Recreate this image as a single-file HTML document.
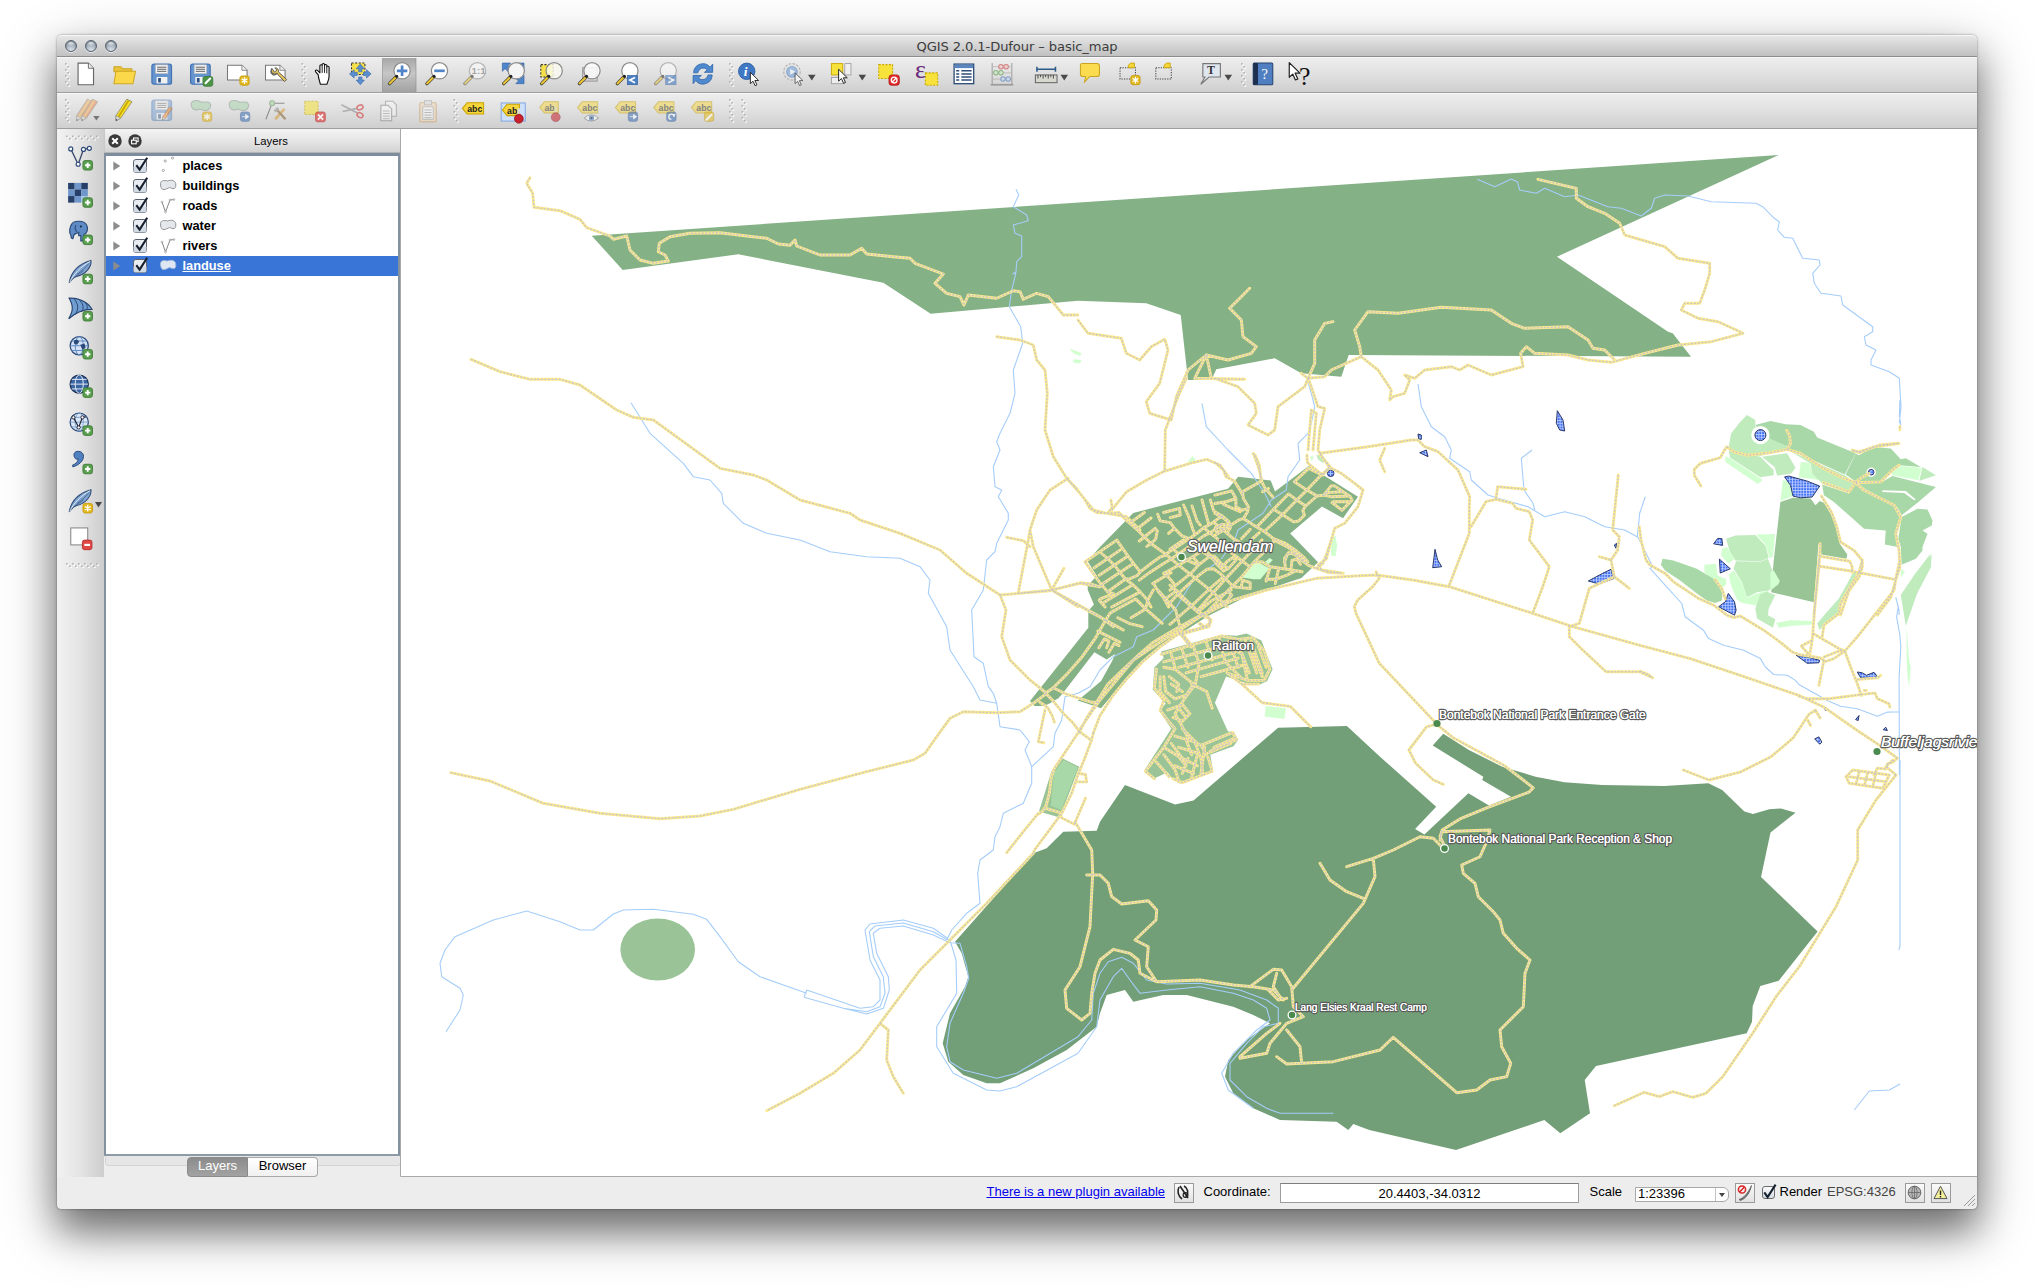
<!DOCTYPE html>
<html><head><meta charset="utf-8"><title>QGIS 2.0.1-Dufour - basic_map</title>
<style>
html,body{margin:0;padding:0}
body{width:2034px;height:1288px;background:#fff;position:relative;overflow:hidden;font-family:"Liberation Sans",sans-serif;color:#000}
.abs{position:absolute}
#win{position:absolute;left:57px;top:35px;width:1920px;height:1174px;background:#ededed;border-radius:5px 5px 4px 4px;
 box-shadow:0 0 1px rgba(0,0,0,.55),0 0 3px rgba(0,0,0,.25),0 22px 36px rgba(0,0,0,.42),0 18px 60px rgba(0,0,0,.30);}
#title{position:absolute;left:0;top:0;width:1920px;height:21px;border-radius:5px 5px 0 0;background:linear-gradient(#e8e8e8,#d4d4d4 50%,#c1c1c1);border-bottom:1px solid #8c8c8c;box-shadow:inset 0 1px 0 #f6f6f6}
#title span{position:absolute;left:0;width:1920px;top:3.5px;text-align:center;font-family:"DejaVu Sans","Liberation Sans",sans-serif;font-size:13.1px;color:#3c3c3c;letter-spacing:-0.1px}
.tl{position:absolute;top:5px;width:10px;height:10px;border-radius:50%;background:radial-gradient(ellipse 62% 34% at 50% 16%,rgba(255,255,255,.8),rgba(255,255,255,0) 100%),radial-gradient(circle at 50% 92%,#dce4ec 0,#a7b3bf 50%,#7a8694 100%);border:1px solid #56616d;box-shadow:inset 0 1px 1px rgba(60,70,80,.55),0 1px 0 rgba(255,255,255,.6)}
.tb{position:absolute;left:0;width:1920px;height:35px;background:linear-gradient(#eeeeee,#e0e0e0 50%,#cfcfcf);border-bottom:1px solid #9e9e9e;box-shadow:inset 0 1px 0 #f8f8f8}
#side{position:absolute;left:0;top:94px;width:47px;height:1048px;background:linear-gradient(90deg,#f2f2f2,#e4e4e4 50%,#cdcdcd)}
#ltitle{position:absolute;left:47px;top:94px;width:296px;height:23px;background:linear-gradient(#f4f4f4,#e2e2e2 60%,#d2d2d2);border-bottom:1px solid #b5b5b5;border-left:1px solid #c8c8c8}
#ltitle span{position:absolute;left:0;width:332px;top:6px;text-align:center;font-size:11.3px}
#list{position:absolute;left:47px;top:118px;width:292px;height:998px;background:#fff;border:2px solid #8492a0;border-top:3px solid #7d8d9e;border-bottom:2px solid #8d9aa8}
.row{position:absolute;left:0;width:292px;height:20px;font-weight:bold;font-size:12.8px;line-height:20px}
.row span{position:absolute;left:76.5px;top:0}
#status{position:absolute;left:0;top:1142px;width:1920px;height:32px;font-size:13px}
#status .t{position:absolute;top:7px;white-space:nowrap}
.sbtn{position:absolute;top:6px;width:20px;height:20px;border:1px solid #9a9a9a;background:linear-gradient(#fafafa,#e2e2e2);box-sizing:border-box}

</style></head><body>
<div id="win">
<div id="title"><span>QGIS 2.0.1-Dufour – basic_map</span>
<div class="tl" style="left:8.3px"></div>
<div class="tl" style="left:28.3px"></div>
<div class="tl" style="left:48.3px"></div>
</div>
<div class="tb" style="top:22px"></div><div class="tb" style="top:58px"></div>
<div id="side"></div>
<div id="ltitle"><span>Layers</span></div>
<div id="list">
<div class="row" style="top:0px;"><span>places</span></div>
<div class="row" style="top:20px;"><span>buildings</span></div>
<div class="row" style="top:40px;"><span>roads</span></div>
<div class="row" style="top:60px;"><span>water</span></div>
<div class="row" style="top:80px;"><span>rivers</span></div>
<div class="row" style="top:100px;background:#3875d7;color:#fff;"><span style="text-decoration:underline">landuse</span></div>
</div>
<div class="abs" style="left:48px;top:1121px;width:294px;height:9px;border:1px solid #d4d4d4;border-top:none;border-radius:0 0 4px 4px;background:#e6e6e6"></div>
<div class="abs" style="left:130px;top:1121.5px;width:61px;height:20px;border:1px solid #8a8a8a;border-radius:4px 0 0 4px;background:linear-gradient(#8c8c8c,#a2a2a2);color:#fff;font-size:13px;line-height:16.5px;text-align:center;box-sizing:border-box">Layers</div>
<div class="abs" style="left:191px;top:1121.5px;width:70px;height:20px;border:1px solid #a8a8a8;border-left:none;border-radius:0 4px 4px 0;background:linear-gradient(#ffffff,#f0f0f0);font-size:13px;line-height:16.5px;text-align:center;box-sizing:border-box">Browser</div>
<div id="status">
<span class="t" style="left:929.5px;color:#0000ee;text-decoration:underline">There is a new plugin available</span>
<div class="sbtn" style="left:1117px"></div>
<span class="t" style="left:1146.5px">Coordinate:</span>
<div class="abs" style="left:1223px;top:6px;width:299px;height:20px;box-sizing:border-box;border:1px solid #9c9c9c;border-top-color:#7e7e7e;background:#fff;text-align:center;line-height:19px;font-size:13px">20.4403,-34.0312</div>
<span class="t" style="left:1532.5px">Scale</span>
<div class="abs" style="left:1578px;top:10px;width:94px;height:15px;box-sizing:border-box;border:1px solid #a8a8a8;border-radius:0 6px 6px 0;background:#fff;font-size:13px;line-height:15px"><span style="position:absolute;left:2px;top:-2px">1:23396</span><span style="position:absolute;left:79px;top:0;width:1px;height:13px;background:#c4c4c4"></span><span style="position:absolute;left:83px;top:5px;border:3px solid transparent;border-top:4px solid #444;border-bottom:none"></span></div>
<div class="sbtn" style="left:1678px"></div>
<div class="abs" style="left:1705px;top:9px;width:13px;height:13px;border:1px solid #6c6c6c;border-radius:3px;background:linear-gradient(#fdfdfd,#d4dbe2);box-sizing:border-box"></div>
<span class="t" style="left:1722.5px">Render</span>
<span class="t" style="left:1770px;color:#444">EPSG:4326</span>
<div class="sbtn" style="left:1848px"></div><div class="sbtn" style="left:1874px"></div>
</div>
</div>
<svg class="abs" style="left:0;top:0" width="2034" height="1288" viewBox="0 0 2034 1288">
<defs><clipPath id="mc"><rect x="401" y="129" width="1576" height="1048"/></clipPath>
<pattern id="hatch" width="2.8" height="2.8" patternUnits="userSpaceOnUse"><rect width="2.8" height="2.8" fill="#3f6ff2"/><path d="M0 0.5 h2.8 M0.5 0 v2.8" stroke="#c4d4ff" stroke-width="0.8"/></pattern>
</defs>
<rect x="401" y="129" width="1576" height="1048" fill="#fff"/>
<g clip-path="url(#mc)">
<polygon points="591.7,235.7 1778.7,155 1557,256.7 1668,331.7 1672.7,333.3 1691,356.7 1348.7,355 1341.3,376.7 1301.3,373.3 1274.7,358.3 1216.3,369.3 1211.3,380 1188,380 1180.7,315 1146.3,303.3 1078,300.7 930.7,313.7 883.3,282.7 738.3,254.3 622.7,270" fill="#85b186"/>
<polygon points="1278.1,727.7 1346.9,726 1380,756.7 1436.2,806.7 1415.1,828.9 1424.4,834.4 1468.4,793.3 1488.9,805.6 1511,796.7 1482.2,780 1483.3,776.7 1432.7,745.6 1443.3,733.8 1468.9,750 1502.2,766.7 1535.6,776.7 1564.4,782.2 1602.2,784.9 1664.4,786 1708.4,783.3 1722.2,790 1744.4,811.4 1753,814 1769.3,809.3 1781,808.5 1795.5,812.7 1770.5,832.5 1761,877 1817.6,931.5 1778.7,980.7 1760.3,986 1752.7,1006 1752,1021.7 1746.7,1033.3 1596,1066 1584.7,1080 1590,1113.3 1560.3,1133.3 1544.3,1120 1456,1150 1369.3,1130 1353.3,1124 1348.3,1130 1336.7,1121.7 1280,1120 1253.3,1108.3 1233.3,1093.3 1225,1076.7 1228.3,1060 1246.7,1040 1270,1023.3 1253.3,1015 1233.3,1006.7 1186.7,995 1163.3,995 1133.3,1001.7 1125,990 1106.7,995 1100,1013.3 1096.7,1026.7 1066.7,1050 1033.3,1068.3 1000,1083.3 986.7,1083.3 963.3,1075 948.3,1061.7 942.7,1043.3 950,1013.3 965,986.7 968.3,976.7 961.7,953.3 955,941.7 1033.3,853.3 1046.7,848.3 1063.3,831.7 1096.7,830.7 1100,821.7 1125,785 1175,804.5 1193.5,800.5" fill="#729f77"/>
<polygon points="1133.2,512.9 1228,488.8 1238.2,476.7 1270.7,480.4 1275,491.5 1308.8,466.1 1358,496.7 1343,518.3 1322,506.5 1290.2,533.4 1318.1,562.2 1301.4,578 1246,596.7 1208.9,615.6 1184.4,631.1 1164.4,643.3 1148.9,655.6 1129.4,674.4 1101.1,708.3 1077.8,700.6 1087.8,692.2 1101.1,681.1 1112.2,661.1 1115,653.9 1106.7,659.4 1094.4,652.2 1062.2,693.9 1058.3,698.3 1050,703.3 1043.9,706.1 1034.4,706.1 1030,701.1 1088.3,627.8 1088.3,611.1 1093.9,604.4 1087.8,590 1087.6,585.4 1096.9,576.1 1087.6,561.2 1098.8,548.2" fill="#85b186"/>
<polygon points="1161.1,651.5 1221.4,634.8 1236.3,635.8 1246.5,633.5 1261.4,640.4 1272.6,669.2 1267,681.3 1258.6,685 1245.6,683.1 1226.1,676.6 1214.9,702.7 1228,731.5 1233.5,731.5 1238.2,739.8 1233.5,746.3 1210.3,754.7 1213.1,771.4 1188,780.7 1179.6,783.5 1173.1,779.8 1167.6,772.3 1153.6,778.8 1144.3,770.5 1171.3,728.7 1159.2,711 1165.7,703.6 1152.7,689.6 1154.5,667.3 1163.8,658.1" fill="#9ac497"/>
<polygon points="1265.7,706 1286.1,708.2 1284.3,719 1264.6,716.6" fill="#d2ffd0"/>
<polygon points="1060.7,757.5 1079.3,766.8 1059.8,817.5 1039,811.4 1051.4,771.4" fill="#9ac497"/>
<polygon points="1063.5,759.9 1078,767.3 1061.3,810.1 1050.8,805.8 1053.8,773.3" fill="#a9d8a8"/>
<polygon points="1728.6,447.6 1731.1,433.4 1740.3,421.7 1747,415 1755.3,420.1 1755.3,426.7 1785.4,442.6 1787.9,449.3 1760.4,456 1733.6,454.3" fill="#bfebbd"/>
<polygon points="1755.3,425.1 1770.4,420.9 1785.4,424.2 1800.5,425.1 1813.9,431.8 1817.2,437.6 1855.6,453.2 1844.8,474.4 1788.8,449.3 1787.1,446 1770.4,438.8 1757,427.6" fill="#a9d8a8"/>
<polygon points="1728.6,450.2 1760.4,456.8 1770.4,466.9 1773.7,470.2 1773.7,475.2 1760.4,477.2 1730.3,457.7" fill="#bfebbd"/>
<polygon points="1725.3,456 1730.3,458.5 1762.9,479.9 1757.9,483.9 1725.3,461.9" fill="#d2ffd0"/>
<polygon points="1762,456.8 1787.1,453.2 1795.5,467.7 1791.3,473.6 1777.1,475.6 1774.6,466.9" fill="#bfebbd"/>
<polygon points="1800.8,461.9 1809.7,462.7 1812.2,473.6 1819.7,479.9 1798.8,477.2" fill="#d2ffd0"/>
<polygon points="1788.8,450.2 1844.8,475.2 1854,481.9 1849.8,493.6 1822.2,483.6 1812.2,473.6 1810.5,463.5" fill="#bfebbd"/>
<polygon points="1782.9,479.9 1789.6,481.6 1793,496.1 1780.4,501.1" fill="#d2ffd0"/>
<polygon points="1822.2,484.4 1849,493.6 1854.8,483.6 1862.3,486.9 1897.4,507 1900.8,517 1894.9,533.7 1897.4,547.1 1884.9,544.6 1885.7,530.4 1864,528.7 1849,515.3 1833.9,502 1823.9,495.3" fill="#a9d8a8"/>
<polygon points="1855.6,453.5 1859,455.2 1872.4,446.8 1890.8,448.5 1900.8,459.3 1905.8,458.2 1920.8,466.9 1899.1,465.2 1880.7,481.9 1857.3,482.7 1845.6,474.4" fill="#a9d8a8"/>
<polygon points="1890.8,470.2 1900.8,466 1921.7,467.7 1918.3,480.2 1892.4,475.2" fill="#d2ffd0"/>
<polygon points="1922.5,466.9 1935.9,475.2 1919.2,481.1" fill="#bfebbd"/>
<polygon points="1857.3,482.7 1880.7,482.7 1892.4,476.1 1935.9,486.9 1917.5,502.8 1901.6,515.3 1897.4,507 1862.3,486.9" fill="#a9d8a8"/>
<polygon points="1882.4,490.3 1905.8,491.1 1915.8,499.5 1914.2,500.3 1904.1,492.9 1882.4,491.9" fill="#ffffff"/>
<polygon points="1901.6,517 1917.5,508.7 1927.5,509.5 1932.5,520.4 1931.7,525.4 1922.5,530.4 1927.5,533.7 1922.5,547.1 1922.5,550.5 1915.8,558.8 1901.6,564.7 1900.8,547.1 1898.3,538.7" fill="#a9d8a8"/>
<polygon points="1931.7,554.6 1930.9,567.2 1905.8,615 1900.8,595.6" fill="#bfebbd"/>
<polygon points="1780.4,502 1793,497.8 1810.5,498.6 1815.5,505.3 1819.7,501.1 1823.9,502.8 1830.6,513.7 1836.4,527 1839.8,543.8 1847.3,554.6 1846.5,558.8 1821.4,554.6 1820.5,543.8 1818.5,543.8 1813.9,602.3 1771.2,592.2 1773.7,560.5" fill="#98c496"/>
<polygon points="1726.1,538.7 1735.3,535.4 1755.3,535.1 1765.4,545.4 1768.7,558 1760.4,561.3 1735.3,560.5 1729.4,550.5" fill="#bfebbd"/>
<polygon points="1756.2,534.6 1775.1,534.1 1772.9,557.1 1769.6,558 1765.4,544.6" fill="#d2ffd0"/>
<polygon points="1736.1,561.3 1760.4,561.8 1767.9,558.8 1773.7,573.9 1779.6,581.4 1768.7,590.6 1757,592.2 1747,597.3 1742,582.2 1733.6,568.8" fill="#bfebbd"/>
<polygon points="1721.9,548.8 1726.9,547.1 1734.5,558.8 1728.6,563.8 1721.1,555.5" fill="#d2ffd0"/>
<polygon points="1704.4,564.7 1716.1,563.8 1717.7,575.5 1726.1,578.9 1726.1,583.9 1721.9,588.9 1704.4,572.2" fill="#d2ffd0"/>
<polygon points="1728.6,574.7 1733.6,570.5 1742,583 1747,598.1 1755.3,593.9 1768.7,590.6 1767,597.3 1757,605.6 1742,603.1 1737,599.8 1731.1,585.6" fill="#d2ffd0"/>
<polygon points="1770.4,572.2 1773.7,570.5 1779.6,580.5 1778.7,583.9 1770.4,590.6" fill="#d2ffd0"/>
<polygon points="1662.6,558.8 1673.4,560.5 1696.8,568.8 1715.2,579.7 1722.7,592.2 1721.9,600.6 1715.2,603.1 1706.9,600.6 1698.5,594.8 1680.1,580.5 1665.1,570.5 1660.9,564.7" fill="#a9d8a8"/>
<polygon points="1760.4,594.3 1767,591.8 1775.4,595.1 1768.7,608.5 1767.9,615.2 1775.4,619.3 1772.9,627.7 1757,618.5 1755.3,608.5" fill="#bfebbd"/>
<polygon points="1776.2,622.7 1790.5,620.2 1812.2,621 1812.2,624.4 1790.5,626 1778.7,627.7" fill="#d2ffd0"/>
<polygon points="1853.1,572.5 1859,573.4 1855.6,583.4 1842.3,603.5 1837.3,615.2 1823.9,624.4 1819.7,630.2 1817.2,623.5 1825.6,613.5 1838.9,598.4 1847.3,583.4" fill="#bfebbd"/>
<polygon points="1930.9,553.3 1905.8,626 1900.8,595.1 1914.2,575" fill="#bfebbd"/>
<polygon points="1906.6,626.9 1909.1,660.3 1910.8,667 1909.1,687 1907.5,677 1906.6,660.3" fill="#d2ffd0"/>
<polygon points="1900.8,568.4 1905,571.7 1900.8,577.6" fill="#d2ffd0"/>
<polygon points="1241.9,577.6 1256.1,560.9 1269.5,568.4 1260.3,579.3 1253.6,579.3" fill="#d2ffd0"/>
<polygon points="1265.3,561.7 1269.5,558 1272.8,560.1 1268.6,564.2" fill="#d2ffd0"/>
<polygon points="1332.1,543.3 1337.2,543.3 1335.9,555.9 1330.9,555.5" fill="#d2ffd0"/>
<polygon points="1332,536.1 1335.4,536.1 1336.6,542.8 1335.8,555.3 1330.8,555.3" fill="#d2ffd0"/>
<polygon points="1310.3,456.7 1312.8,455.4 1313.6,458.3 1311.1,460.9" fill="#d2ffd0"/>
<polygon points="1316.5,455 1320.3,455 1324.5,461.7 1322.8,462.9 1317.8,459.2" fill="#bfebbd"/>
<polygon points="1187.3,461.7 1192.7,456 1196.7,461.7" fill="#d2ffd0"/>
<polygon points="1069.3,348.3 1081.7,353.3 1080,356 1073.3,353.3" fill="#d2ffd0"/>
<polygon points="1073.3,359.3 1081.7,360 1080,363.3 1073.3,362.7" fill="#d2ffd0"/>
<ellipse cx="657.7" cy="949.5" rx="37.3" ry="31" fill="#9ac497"/>
<circle cx="1760.4" cy="435.1" r="9.2" fill="#fff"/>
<circle cx="1871.2" cy="472.2" r="4.7" fill="#fff"/>
<path d="M1899.9 400 L1899.4 415 L1900.8 425.1 M1895.8 597.3 L1899.1 610.6 L1899.1 615 M1895.8 597.6 L1898.3 606.8 L1896.6 616.8 L1899.9 635.2 L1900.8 646.9 L1899.1 677 L1899.4 775 M631 402.7 L650 433.3 L683.3 463.3 L693.3 476.7 L710 480 L721.7 493.3 L723.3 503.3 L743.3 523.3 L766.7 533.3 L800 540 L830 551.7 L866.7 556.7 L900 558.3 L920 566.7 L930 580 L928.3 593.3 L946.7 626.7 L950 650 L973.3 686.7 L980 700 L996.7 703.3 L1000 726.7 L1020 730 L1029.3 741.7 L1025 750 L1031.7 766.7 M1016 189.3 L1018.7 195 L1013.3 206.7 L1026.7 215 L1028.3 220.7 L1013.3 225 L1015 233.3 L1021.7 236 L1021.7 256.7 L1016.7 261.7 L1016 271.7 L1012.7 274 L1016 272.7 L1011.7 290 L1009.3 306.7 L1020.7 326.7 L1022.7 343.3 L1013.3 370 L1015 393.3 L1010 413.3 L1000 433.3 L996.7 441.7 L1000 450 L993.3 466.7 L995 486.7 L1001.7 490 L998.3 496.7 L1008.3 513.3 L1008.3 520 L996.7 543.3 L995 551.7 L986.7 560 L983.3 590 L971.7 610 L974 656.7 L983.3 663.3 L988.3 686.7 L993.3 693.3 L996.7 703.3 M1078 693.3 L1065 696.7 L1061.7 720 L1055 733.3 L1053.3 746.7 L1031.7 766.7 L1031.7 783.3 L1023.3 803.3 L1003.3 813.3 L1000 826.7 L995 836.7 L993.3 850 L980 860 L977.7 873.3 L980 903.3 L966.7 913.3 L951.7 930 L946.7 940 M446 1031.7 L460 1010 L463.3 995 L460 988.3 L441.7 976.7 L440 963.3 L445 950 L455 936.7 L493.3 920 L526.7 911 L560 921.7 L580 930 L593.3 930 L613.3 914 L623.3 910 L653.3 909.3 L693.3 914.3 L706.7 919.3 L720 936.7 L738.3 961.7 L760 976.7 L806.7 993.3 M804 997.3 L806.7 990 L860 1008.3 L873.3 1006.7 L880 1000 L880 980 L870 960 L865 930 L870 924 L903.3 920 L933.3 928.3 L950 940 L956 960 L956.7 993.3 L936.7 1026.7 L936.7 1046.7 L953.3 1073.3 L986.7 1090 L1000 1091 L1016.7 1086.7 L1078 1053.3 M804 997.3 L843.3 1008.3 L866.7 1014 L883.3 1008.3 L889.3 990 L888.3 976.7 L876.7 953.3 L873.3 933.3 L880 928.3 L903.3 926 L933.3 935 L950 942.7 L960 943.3 L966.7 966.7 L968.7 978.3 L963.3 993.3 L950 1023.3 L946.7 1046.7 L950 1061.7 L963.3 1070 L996.7 1078.3 L1016.7 1073.3 L1078 1036.7 M843.3 1008.3 L866.7 1011.7 L880 1006.7 L885 993.3 L883.3 976.7 L873.3 956.7 L869.3 931.7 L875 926 L903.3 923 L933.3 931.7 L950 941.3 M1477.3 179.3 L1494.7 186.7 L1511.3 179 L1517.3 181.7 L1519.7 190 L1536.3 193.3 L1544.7 188.3 L1564.7 196.7 L1578 195 L1608 206.7 L1621.3 208.3 L1641.3 216 L1651.3 208.3 L1654.7 198.3 L1664.7 195 L1688 196 L1711.3 201.7 L1756 203.3 M1202 403.3 L1206.3 426.7 L1228 450 L1251.3 473.3 L1264.7 493.3 L1271.3 506.7 M1307.3 380 L1311.3 393.3 L1314.7 406.7 L1311.3 423.3 L1308 433.3 L1298 443.3 L1299.7 460 L1288 476.7 L1286.3 490 L1271.3 500 L1263 513.3 L1238 530 L1234.7 540 L1221.3 559 M1418 384 L1421.3 406.7 L1428 420 L1431.3 426.7 L1444.7 436.7 L1451.3 450 L1449.7 458.3 L1469.7 471.7 L1471.3 480 L1488 495 L1498 498.3 L1528 506.7 L1544.7 516.7 L1564.7 511.7 L1584.7 516.7 L1604.7 526.7 L1624.7 530 L1638 537.3 L1646 553.3 L1652.7 566.7 L1650 568.4 L1665.1 585.1 L1681.8 603.5 L1685.1 616.8 L1703.5 630.2 L1708.5 638.6 L1723.6 645.3 L1743.6 650.3 L1760.4 658.6 L1765.4 667 L1773.7 674.5 L1787.1 675.3 L1795.5 680.4 L1798.8 684.5 L1815.5 693.7 L1827.2 700.4 L1840.6 706.3 L1857.3 708.8 L1877.4 716.3 L1887.4 712.1 L1899.1 711.8 M1532 450 L1521.3 458.3 L1524 490 L1533 503.3 L1534.7 510 M1645.3 496.7 L1639.7 513.3 L1637.3 537.3 M1756 203.3 L1762.7 206.7 L1774.3 218.3 L1779.3 221.7 L1777.7 230 L1784.3 237.3 L1792.7 238.3 L1802.7 258.3 L1819.3 260 L1820 265 L1812.7 273.3 L1814.3 283.3 L1821 293.3 L1841 296 L1842.7 305 L1872.7 326.7 L1872.7 331.7 L1864.3 336.7 L1866 345 L1876 350 L1871 360 L1871 365 L1889.3 371.7 L1899.3 378.3 L1901 406.7 L1899.3 423.3 M1900 760 L1900 946.7 L1898.7 950 M1854.3 1110 L1869.3 1091 L1889.3 1090 L1900 1084 M1078 1053.3 L1096.7 1026.7 L1100 1000 L1113.3 976.7 L1121.7 968.3 L1130 980 L1140 993.3 L1166.7 990 L1200 986.7 L1233.3 993.3 L1253.3 1000 L1266.7 1008.3 L1270 1020 L1256.7 1030 L1233.3 1053.3 L1221.7 1073.3 L1228.3 1090 L1253.3 1108.3 M1078 1036.7 L1091.7 1020 L1093.3 993.3 L1100 973.3 L1108.3 961.7 L1121.7 957.3 L1133.3 963.3 L1146.7 980 L1166.7 984 L1200 983.3 L1240 990 L1266.7 1000 L1278.3 1008.3 L1278.3 1023.3 L1263.3 1026.7 L1246.7 1043.3 L1230 1063.3 L1230 1080 L1246.7 1096.7 L1266.7 1108.3 L1280 1113.3 L1333.3 1113.3 M1220 560 L1193.3 580 L1176.7 606.7 L1153.3 630 L1136.7 636.7 L1133.3 646.7 L1113.3 656.7 L1100 670 L1090 686.7 L1078 693.3" fill="none" stroke="#a5cdfa" stroke-width="1.1" stroke-linejoin="round"/>
<polygon points="1784.6,476.9 1788.8,476.1 1807.2,481.1 1819.7,486.1 1812.2,497 1800.5,497.8 1793,496.1 1790.5,485.3" fill="url(#hatch)" stroke="#1c2a5c" stroke-width="0.9" stroke-linejoin="round"/>
<polygon points="1713.6,543.8 1717.7,538.4 1721.9,538.7 1722.7,545.4" fill="url(#hatch)" stroke="#1c2a5c" stroke-width="0.9" stroke-linejoin="round"/>
<polygon points="1719.4,559.1 1730.3,568.8 1720.2,573" fill="url(#hatch)" stroke="#1c2a5c" stroke-width="0.9" stroke-linejoin="round"/>
<polygon points="1718.6,606.8 1725.3,601.8 1728.3,593.4 1734.5,601.8 1736.1,610.2 1734.5,615.2" fill="url(#hatch)" stroke="#1c2a5c" stroke-width="0.9" stroke-linejoin="round"/>
<polygon points="1796.3,655.3 1807.2,657 1819.7,660.3 1818.9,662.8 1807.2,663.3" fill="url(#hatch)" stroke="#1c2a5c" stroke-width="0.9" stroke-linejoin="round"/>
<polygon points="1857.3,672 1862.3,672.8 1866.5,675.3 1874,672.3 1876.5,675.3 1875.7,677.9 1860.7,677.9" fill="url(#hatch)" stroke="#1c2a5c" stroke-width="0.9" stroke-linejoin="round"/>
<polygon points="1821.9,705.4 1827.2,708.8 1825.9,710.5" fill="url(#hatch)" stroke="#1c2a5c" stroke-width="0.9" stroke-linejoin="round"/>
<polygon points="1855.6,719.6 1859,715.5 1858.2,720.5" fill="url(#hatch)" stroke="#1c2a5c" stroke-width="0.9" stroke-linejoin="round"/>
<polygon points="1883.2,729.7 1885.7,727.2 1887.4,730.5" fill="url(#hatch)" stroke="#1c2a5c" stroke-width="0.9" stroke-linejoin="round"/>
<polygon points="1814.7,738.9 1818.9,736.9 1821.9,742.2 1819.7,744.2" fill="url(#hatch)" stroke="#1c2a5c" stroke-width="0.9" stroke-linejoin="round"/>
<polygon points="1557.3,410.7 1563,420 1564.7,431 1559.7,430 1556.3,423.3" fill="url(#hatch)" stroke="#1c2a5c" stroke-width="0.9" stroke-linejoin="round"/>
<polygon points="1418,434 1421.3,435 1421.3,439.3 1418.7,439.3" fill="url(#hatch)" stroke="#1c2a5c" stroke-width="0.9" stroke-linejoin="round"/>
<polygon points="1419.7,452.7 1426.3,450 1428,456.7" fill="url(#hatch)" stroke="#1c2a5c" stroke-width="0.9" stroke-linejoin="round"/>
<polygon points="1435,549.3 1437.7,560 1441.7,566.7 1432.7,567.7" fill="url(#hatch)" stroke="#1c2a5c" stroke-width="0.9" stroke-linejoin="round"/>
<polygon points="1588.3,581 1602.7,573.3 1611,569.3 1614.3,578.3 1599.3,584" fill="url(#hatch)" stroke="#1c2a5c" stroke-width="0.9" stroke-linejoin="round"/>
<polygon points="1614.3,545 1616.7,543.3 1616,548.3" fill="url(#hatch)" stroke="#1c2a5c" stroke-width="0.9" stroke-linejoin="round"/>
<circle cx="1760.4" cy="435.1" r="5.5" fill="url(#hatch)" stroke="#1c2a5c" stroke-width="0.9"/>
<circle cx="1871.2" cy="472.2" r="2.8" fill="url(#hatch)" stroke="#1c2a5c" stroke-width="0.9"/>
<circle cx="1330.7" cy="473.3" r="3.3" fill="url(#hatch)" stroke="#1c2a5c" stroke-width="0.9"/>
<defs><path id="rd" d="M1701 486.1 L1694.3 475.2 L1694.3 469.4 L1700.2 463.5 L1720.2 457.7 L1724.4 450.2 L1726.9 446.8 M1726.9 446.8 L1733.6 451.8 L1747 455.2 L1770.4 452.7 L1787.1 449.3 L1790.5 443.5 L1789.6 435.9 L1786.8 430.4 M1787.1 449.3 L1800.5 453.5 L1823.9 468.5 L1840.6 476.9 L1855.6 482.7 L1864 490.3 L1894.1 505.3 L1900.8 517 L1895.8 533.7 L1899.1 550.5 L1899.9 567.2 L1895.8 579.7 M1855.6 482.7 L1880.7 481.9 L1892.4 470.2 L1899.1 465.2 M1855.6 481.9 L1864 476.1 L1869 473.6 M1852 450.2 L1859 451.8 L1874 446.8 L1898.8 443.5 M1823 482.7 L1849 491.9 L1854.8 483.6 M1821.4 496.1 L1831.4 512 L1836.4 525.4 L1840.6 542.1 L1854 550.5 L1862.3 560.5 L1862.3 567.2 L1859 577.2 L1849 590.6 L1840.6 615 M1820.2 543.8 L1818.9 567.2 L1813.9 615 M1819.7 556.3 L1849.8 561.3 L1852.3 567.2 L1852 572.2 M1819.7 566.3 L1852.3 571.3 L1895.8 579.7 M1895.8 579.7 L1890.8 597.3 L1877.4 615 M1715.2 579.7 L1721.9 588.9 L1725.3 598.9 M1899.9 426.4 L1899.9 430.1 M1640 671.2 L1648.4 674.5 L1652.5 677.9 M1818.9 560 L1813.9 618.5 L1812.2 640.2 L1809.7 654.5 M1812.2 640.2 L1801.3 646.1 L1808.8 654.5 M1813 633.6 L1838.9 648.6 L1844.8 651.1 M1862.3 560 L1859 572.5 L1849 588.4 L1840.6 603.5 L1838.9 613.5 L1823.9 625.2 L1822.2 636.9 M1899.9 560 L1895.8 578.4 L1894.1 590.1 L1882.4 605.1 L1857.3 636.9 L1844.8 651.1 L1833.9 658.6 L1823.9 662 M1823.9 657 L1838.9 651.1 L1844.8 650.3 M1823.9 660.3 L1818.9 685.4 M1844.8 651.1 L1850.6 667 L1857.3 683.7 L1861.5 695.4 M1857.3 679.5 L1877.4 677.9 L1880.7 675.3 M1798.8 696.2 L1807.2 698.7 L1828.9 698.7 L1860.7 694.6 L1874.9 692.9 L1877.4 698.7 L1889.1 703.8 L1889.9 707.1 M1864 690.4 L1866.5 690.4 M1815.5 710.5 L1820.2 718 M1808 720.5 L1810.5 725.5 M1897.4 758.1 L1892.4 762.3 L1887.4 763.9 L1885.7 769 L1877.4 768.1 L1874 775 M530 177.7 L526.7 183.3 L532.7 193.3 L534 207.3 L560 210.7 L580 219.3 L586.7 227.7 L610 236 L613.3 239.3 L626.7 236 L630 250 L640 260 L653.3 263.3 L668.3 261 L665 255 L658.3 251.7 L659.3 243.3 L670 236.7 L690 233.3 L720 232.7 L746.7 236 L766.7 238.3 L778.3 244 L790 245.3 L795 240 L796.7 246 L820 255 L850 255 L861.7 248.3 L866.7 254 L893.3 256.7 L910 258.3 L915 263.3 L943.3 274 L935 283.3 L946.7 293.3 L960 296.7 L964 305 L968.3 295 L996.7 298.3 L1013.3 290.7 L1020 291.7 L1023.3 299.3 L1036.7 293.3 L1048.3 296.7 L1063.3 315 L1078 315 M471 359.3 L500 371.7 L530 379.3 L560 379.3 L580 385 L616.7 410 L633.3 417.3 L653.3 420 L683.3 441.7 L720 468.3 L753.3 475 L766.7 480 L800 500 L850 513.3 L860 520 L900 533.3 L940 550 L966.7 573.3 L1000 595 L1006 610 L1001.7 636.7 L1010 660 L1030 680 L1046.7 693.3 M996.7 336.7 L1020 340 L1033.3 345 L1036.7 360 L1045 370 L1047.3 393.3 L1045 430 L1053.3 456.7 L1066.7 478.3 L1078 490 M1068.3 478.3 L1050 490 L1036.7 510 L1030 530 L1028.3 540 L1018.3 592.7 M1006.7 537.3 L1023.3 540.7 L1030 546.7 M1000 595 L1050 590.7 L1078 583.3 M1030 530 L1033.3 546.7 L1051.7 590 L1078 606.7 M1051.7 590 L1064 568.3 M450.7 772.7 L490 781 L543.3 803.3 L600 813.3 L660 818.7 L700 816 L733.3 809.3 L800 789.3 L866.7 771.7 L913.3 760 L925 753.3 L936.7 736.7 L950 718.3 L963.3 711.7 L996.7 712.7 L1020 711.7 L1033.3 703.3 L1046.7 693.3 M1045 710 L1038.3 741.7 L1044 742.7 M1033.3 853.3 L986.7 903.3 L950 940 L920 970 L880 1023.3 L860 1050 L833.3 1073.3 L800 1093.3 L766.7 1110.7 M880 1023.3 L888.3 1030 L886.7 1060 L893.3 1076.7 L903.3 1093.3 M1038.3 813.3 L1023.3 831.7 L1006.7 852.7 M1078 320 L1088 333.3 L1121.3 338.3 L1126.3 353.3 L1139.7 360 L1151.3 346.7 L1164.7 339.3 L1168 350 L1159.7 383.3 L1146.3 401.7 L1149.7 413.3 L1171.3 420 L1176.3 396.7 L1188 370 L1206.3 355 L1228 360 L1251.3 353.3 L1256.3 346.7 L1243 336.7 L1241.3 320 L1229.7 308.3 L1241.3 296.7 L1249.7 288.3 M1196.3 378.3 L1244.7 379.3 M1194.7 378.3 L1206.3 355 L1211.3 378.3 M1214.7 378.3 L1238 386.7 L1254.7 403.3 L1256.3 413.3 L1248 425 L1268 435 L1274.7 430 L1278 406.7 L1291.3 396.7 L1304.7 386.7 L1308 378.3 L1301.3 373.3 M1308 378.3 L1324.7 376.7 L1331.3 370 L1361.3 356.7 L1359.7 346.7 L1354.7 330 L1368 311.7 L1398 313.3 L1441.3 307.3 L1491.3 310 L1511.3 323.3 L1524.7 328.3 L1568 326.7 L1588 340 L1593 348.3 L1604.7 350 L1614.7 360 M1308 378.3 L1314.7 363.3 L1314.7 340 L1324.7 323.3 L1333 321.7 M1361.3 356.7 L1378 370 L1391.3 390 L1389.7 400 L1393 396.7 L1404.7 393.3 L1409.7 380 L1404.7 375 L1414.7 378.3 L1424.7 370 L1451.3 366.7 L1459.7 370 L1468 365 L1491.3 375 L1523 366.7 L1520.7 353.3 L1526.3 346.7 L1534.7 353.3 L1568 355 L1588 360 L1611.3 362.3 L1644.7 353.3 L1678 345 L1711.3 341.7 L1743 333.3 L1736.3 330 L1718 321.7 L1698 318.3 L1681.3 310 L1684.7 303.3 L1699.7 303.3 L1704.7 290 L1709.7 273.3 L1709.7 263.3 L1678 258.3 L1664.7 246.7 L1624.7 235 L1619.7 223.3 L1604.7 213.3 L1588 206.7 L1576.3 198.3 L1576.3 188.3 L1538 179.3 M1308 378.3 L1311.3 386.7 L1318 406.7 L1324.7 408.3 L1319.7 430 L1318 450 L1323 458.3 L1331.3 468.3 L1341.3 473.3 L1354.7 483.3 L1363 490 L1358 506.7 L1344.7 523.3 L1334.7 528.3 L1331.3 540 L1326.3 559 M1308 450 L1311.3 410 L1316.3 413.3 L1313 450 M1319.7 453.3 L1368 446.7 L1411.3 440 L1418 440 L1424.7 446.7 L1438 451.7 L1458 470 L1469.7 496.7 L1469.3 506.7 L1469.3 533.3 L1449.3 585 M1384.7 448.3 L1379.7 460 L1384.7 471.7 M1164.7 470 L1165.3 430 L1178 396.7 L1186.3 378.3 M1898.7 443.3 L1879.3 445 L1859.3 452.7 L1852.7 450.7 M1471 526.7 L1486 501.7 L1496 499.3 L1512.7 503.3 L1516 508.3 L1529.3 511.7 L1532.7 520 L1529.3 540 L1549.3 566.7 L1542.7 586.7 L1532.7 613.3 M1496 498.3 L1497.7 486.7 L1526 489.3 M1618.3 475 L1612.7 530 L1619.3 536.7 L1617.7 550 L1611 560 L1599.3 556.7 M1611 560 L1614.3 576.7 L1629.3 588.3 M1614.3 576.7 L1589.3 588.3 L1579.3 623.3 L1569.3 626.7 L1569.3 636.7 L1582.7 650 L1606 671.7 L1639.3 671.7 L1652.7 677.7 M1639.3 526.7 L1641 540 L1646 560 L1650 565 L1665.1 573.4 L1673.4 581.7 L1698.5 598.4 L1713.6 605.1 L1726.9 615.2 L1733.6 617.7 L1740.3 616 L1763.7 630.2 L1782.1 643.6 L1792.1 651.9 L1798.8 654.5 L1819.7 657.8 L1823.9 660.3 M1376 571.7 L1379.3 578.3 L1372.7 586.7 L1357.7 600 L1354.3 606.7 L1356 613.3 L1379.3 663.3 L1436 723.3 M1180 630 L1200 616.7 L1233.3 600 L1266.7 590 L1316.7 578.3 L1355 576 L1376.7 575 L1412.7 580 L1449.3 586.7 L1532.7 613.3 L1572.7 626.7 L1640 645.3 L1690.2 658.6 L1740.3 675.3 L1798.8 695.4 L1823.9 707.1 L1857.3 730.5 L1877.4 743.9 L1897.4 758.1 M1075 821.7 L1091.7 850 L1092.7 873.3 L1090 926.7 L1080 966.7 L1065 990 L1066.7 1008.3 L1081.7 1020 L1090 1013.3 L1091.7 993.3 L1095 973.3 L1100 960 L1113.3 949.3 L1130 953.3 L1138.3 960 L1140 973.3 L1156.7 981.7 L1200 980 L1233.3 985 L1253.3 986.7 L1273.3 990 L1283.3 1000 M1086.7 875 L1100 875 L1108.3 883.3 L1111.7 896.7 L1121.7 904 L1148.3 900.7 L1156.7 910 L1156 920 L1135 940 L1148.3 946.7 L1146.7 966.7 L1156.7 981.7 M1250 986.7 L1273.3 969.3 L1281.7 970 L1291.7 986.7 L1293.3 1006.7 L1303.3 1016.7 L1286.7 1023.3 L1270 1043.3 L1266.7 1053.3 L1240 1058.3 M1240 1056.7 L1266.7 1033.3 L1280 1023.3 M1276.7 973.3 L1273.3 986.7 L1280 996.7 M1268.3 990 L1278.3 1000 L1286.7 998.3 M1291.7 990 L1363.3 903.3 L1375 876.7 L1373.3 858.3 M1320 863.3 L1330 880 L1346.7 891.7 L1363.3 898.3 M1346.7 866.7 L1373.3 858.3 L1393.3 850 L1420 836.7 L1433.3 838.3 L1441.7 846.7 M1286.7 1030 L1300 1046.7 L1301.7 1063.3 L1286.7 1064 L1276.7 1056.7 M1301.7 1063.3 L1333.3 1061.7 L1380 1050 L1393.3 1037.3 L1456.7 1092.7 L1476.7 1090 L1490 1080 L1506.7 1076.7 L1510.7 1063.3 L1501.7 1046.7 L1500 1030 L1523.3 1006.7 L1525 973.3 L1530 960 L1516.7 948.3 L1503.3 933.3 L1500 920 L1493.3 911.7 L1478.3 896.7 L1475 883.3 L1463.3 873.3 L1461.7 865 L1480 856.7 L1486.7 841.7 L1490 830 L1441.7 831.7 L1440 840 M1436.7 724.4 L1453.3 737.8 L1504.4 765.6 L1533.3 787.8 L1528.9 792.2 L1486.7 807.8 L1460 818.9 L1442.2 830 L1440 836.7 L1444.4 845.6 M1436.7 724.4 L1426.7 726.7 L1408.9 750 L1415.6 763.3 L1433.3 780 L1443.3 784.4 M1683.3 770 L1708.9 780 L1740 772.2 L1771.1 756.7 L1793.3 737.8 L1808.9 714.4 L1815.6 710 M1896 775 L1876 800 L1857.7 830 L1857.7 860 L1836 906.7 L1799.3 966.7 L1776 996.7 L1752.7 1033.3 L1722.7 1076.7 L1706 1093.3 L1692.7 1097.3 L1672.7 1091.7 L1659.3 1096.7 L1644.3 1092.3 L1614.3 1105.7 M1846 776.7 L1852.7 770 L1889.3 775 L1882.7 788.3 L1849.3 783.3 L1846 776.7 M1859.3 771.7 L1856 784 M1867.7 772.7 L1864.3 785.7 M1876 773.3 L1872.7 786.7 M1849.3 776.7 L1886 781.7 M1896 775 L1886 766.7 L1892.7 760 M1163.3 471.7 L1190 463.3 L1206.7 459.3 L1220 465 L1228.3 476.7 M1253.3 453.3 L1258.3 466.7 L1261.7 480 M1111.7 510 L1126.7 491.7 L1146.7 480 L1163.3 471.7 M1066.7 478.3 L1080 493.3 L1093.3 510 L1106.7 513.3 L1126.7 516.7 L1140 530 M1051.7 590 L1100 616.7 L1113.3 626.7 M1051.7 590 L1080 583.3 L1100 586.7 M1326.7 558.3 L1318.3 565 L1321.7 570 L1343.3 573.3 M1080 729 L1100 700 L1133.3 660 L1163.3 640 L1180 630 M1085 500 L1090 508.4 L1096.7 512.5 L1107.6 513.4 L1119.3 512.5 L1125.1 519.2 L1138.5 530.9 L1151 543.5 L1166.9 555.2 L1178.6 565.2 L1194.5 577.7 L1213.7 592.8 L1227.1 607 M1110.9 500 L1112.2 507.5 L1107.6 513.4 M1131.8 521.7 L1144.4 512.5 M1137.7 528.4 L1151 518 M1139.3 541 L1155.2 528.4 L1157.3 530.9 L1155.6 539.3 L1151 543.5 L1146.9 546.4 M1085 561.8 L1116.8 540.1 L1126.8 554.3 L1134.3 564.4 L1140.2 571.9 L1137.7 575.2 L1130.1 578.6 L1125.5 579 M1085 561.8 L1099.2 581.9 L1107.6 591.9 L1113.4 593.6 L1100.9 598.6 L1099.2 600.3 L1105.1 607 M1094.2 567.7 L1120.1 550.1 M1101.7 553.5 L1107.6 558.5 L1115.1 566 L1120.1 572.7 L1125.5 579 L1133.5 585.2 L1140.2 591.9 L1146.9 599.5 L1151 607 M1099.2 575.2 L1126.8 556.8 M1104.2 582.7 L1133.5 563.5 M1080 582.7 L1090 583.6 L1099.2 586.9 L1104.2 582.7 M1107.6 591.9 L1125.5 579 M1103.4 602.8 L1131.8 585.2 M1111.8 607 L1140.2 591.9 M1140.2 571.9 L1151 563.5 L1160.2 556.8 L1166.9 555.2 M1139.3 580.2 L1149.4 572.7 L1163.6 563.5 L1171.9 558.5 L1191.2 545.1 L1203.7 535.9 L1210.4 532.6 L1222.1 524.2 M1157.7 514.2 L1160.2 520.9 L1170.3 522.6 L1174.4 528.4 L1168.6 533.4 M1163.6 512.5 L1179.5 508.4 L1180.3 515 L1170.3 517.6 M1183.6 505 L1188.7 516.7 L1192.8 529.3 L1194.5 533.4 M1192 505.9 L1197 520.9 L1200.4 525.1 M1202 500 L1205.4 512.5 L1208.7 524.2 M1210.4 500 L1213.7 510.9 L1222.1 515.9 L1228.8 521.7 L1230.4 527.6 L1227.1 533.4 M1222.1 515.9 L1210.4 524.2 L1203.7 527.6 L1197 533.4 L1192 536.8 L1182 543.5 L1170.3 551 L1164.4 555.2 M1215.4 527.6 L1222.1 524.2 L1227.1 525.1 L1217.1 533.4 L1215.4 527.6 M1203.7 527.6 L1210.4 533.4 L1217.1 538.4 L1222.1 543.5 L1227.1 549.3 L1238.8 558.5 L1250 566.9 M1174.4 528.4 L1182 535.9 L1192.8 540.1 L1199.5 550.1 L1210.4 556.8 L1222.1 566.9 M1163.6 573.5 L1178.6 565.2 L1191.2 557.7 L1203.7 550.1 M1152.7 583.6 L1163.6 576.9 L1171.1 572.7 M1164.4 572.7 L1171.1 580.2 L1174.4 584.4 M1153.5 583.6 L1158.6 591.9 L1163.6 597.8 L1168.6 607 M1166.9 597.8 L1176.9 590.3 M1256.8 526.9 L1273.5 509.3 L1288.5 493.9 L1296.9 500.1 L1305.7 506 M1264.3 531.5 L1281.9 515.2 L1296.9 500.1 L1306.9 490.1 L1320.3 475.9 L1329.5 467.5 M1294.4 481.7 L1308.6 468.4 L1322.8 475.1 M1294.4 481.7 L1306.9 490.1 L1317 496 L1323.7 495.1 L1331.2 485.9 L1334.5 485.9 L1350.4 496.8 L1352.1 500.1 L1342 510.2 M1273.5 509.3 L1283.5 515.2 L1293.6 521.9 L1298.6 521 L1304.4 515.2 L1302.8 510.2 L1305.7 506 L1317 496 M1323.7 495.1 L1332 496.8 L1348.7 496 M1333.7 501.8 L1348.7 501.8 M1332 502.6 L1342 510.2 M1326.2 492.6 L1342 491.8 M1306.9 455 L1307.4 462.5 L1311.1 465.9 L1322.8 475.1 L1329.5 467.5 L1322.8 457.5 L1320.3 455 M1215 462.5 L1223.4 470 L1225.9 476.7 L1234.2 480.9 L1240.1 490.1 L1242.6 495.1 M1255.1 455 L1259.3 465 L1261 480.1 L1265.1 488.4 L1272.7 496.8 M1242.6 491.8 L1260.1 481.7 M1262.6 491.8 L1268.5 488.4 M1242.6 491.8 L1243.4 498.5 L1248.4 506.8 L1247.6 511.8 L1243.4 518.5 L1238.4 520.2 L1231.7 524.4 L1223.4 530.2 L1215 535.2 M1215 495.1 L1231.7 490.9 L1235.9 498.5 L1235.9 506.8 L1242.6 510.2 L1247.6 508.5 M1215 503.5 L1225.9 501.8 L1235.9 498.5 M1223.4 504.3 L1240.1 511.8 M1243.4 518.5 L1252.6 524.4 L1264.3 531.5 L1273.5 538.6 L1286 543.6 L1294.4 549.4 L1303.6 557 L1307.8 562 M1215 513.5 L1224.2 518.5 L1230 524.4 M1215 523.5 L1223.4 530.2 L1234.2 539.4 L1239.2 541.9 M1241.7 538.6 L1250.1 529.4 M1251.8 539.4 L1259.3 532.7 M1284.4 562 L1287.7 553.6 L1292.7 552.8 L1303.6 562 M1170 624.4 L1182.5 613.5 L1195.9 601.8 L1211.8 586.8 L1223.5 576.8 M1198.4 609.4 L1211.8 594.3 L1225.2 579.3 L1238.5 565.1 L1248.6 554.2 L1258.6 544.2 L1261.9 540 M1209.3 609.4 L1220.1 598.5 L1231.8 586.8 L1241 577.6 L1253.6 562.6 L1261.9 554.2 L1273.6 541.7 M1170 590.1 L1179.2 582.6 L1191.7 572.6 L1198.4 565.1 L1209.3 556.7 L1214.3 555.9 L1221.8 564.2 L1228.5 568.4 M1170 602.7 L1178.4 593.5 L1195.1 578.4 L1200.1 574.3 L1206.8 569.3 L1213.5 568.8 L1220.1 573.4 L1226 579.3 L1233.5 586.8 M1170 549.2 L1183.4 540 M1170 585.1 L1178.4 592.7 L1195.9 609.4 L1206.8 617.7 M1175 550.9 L1186.7 560.1 L1198.4 565.1 M1192.6 556.7 L1199.3 564.2 M1205.9 550.9 L1211.8 556.7 L1216.8 564.2 L1223.5 570.9 L1228.5 568.4 L1236 560.1 L1232.7 557.6 L1226.8 561.7 L1221.8 567.6 M1253.6 562.6 L1261.9 561.7 L1270.3 566.7 L1287 569.3 L1302.1 571.8 M1270.3 566.7 L1266.1 581 M1278.7 568.4 L1275.3 583.5 M1266.1 579.3 L1275.3 579.3 L1287 575.1 L1295.4 570.9 M1285.3 567.6 L1284.5 558.4 L1288.7 552.5 L1295.4 555 L1303.7 561.7 L1307.9 565.1 M1291.2 567.6 L1292 560.1 L1297 559.2 L1300.4 564.2 M1273.6 540 L1287 546.7 L1300.4 556.7 L1307.9 565.1 L1316.3 568.4 L1328.8 572.6 L1340 573 M1316.3 568.4 L1322.9 563.4 L1327.1 552.5 L1331.3 540 M1233.5 586.8 L1241 587.6 L1250.2 588.5 M1241 587.6 L1242.7 580.1 L1250.2 582.6 L1250.2 588.5 M1228.5 591.8 L1231.8 595.2 L1227.7 600.2 M1178.4 632.8 L1195.1 629.4 L1205.1 626.9 L1210.1 622.7 L1209.3 618.6 L1206.8 616.9 M1199.3 623.6 L1203.4 627.8 M1179.2 632.8 L1186.7 640.3 L1190.9 647 M1045.6 693.3 L1053.3 701.1 L1062.2 712.2 L1073.3 723.3 L1080 732.2 M1045.6 693.3 L1053.3 687.8 L1066.7 674.4 L1082.2 656.7 L1095.6 637.8 L1104.4 622.2 L1110 613.3 L1115.6 610 M1053.3 687.8 L1064.4 693.3 L1077.8 697.8 L1091.1 702.2 L1096.7 702.2 L1100 696.7 L1107.8 684.4 L1120 672.2 L1136.7 656.7 L1153.3 642.2 L1177.8 627.8 L1197.8 616.7 L1208.9 611.1 M1093.3 733 L1100 715.6 L1112.2 696.7 L1126.7 678.9 L1142.2 662.2 L1158.9 647.8 L1177.8 634.4 L1184.4 633.3 L1208.9 626.7 L1211.1 620 L1207.8 616.7 M1200 623.3 L1204.4 626.7 M1078.9 733 L1086.7 717.8 L1096.7 702.2 M1180 633.3 L1186.7 642.2 L1190 644.4 M1020 593.3 L1052.2 590 L1086.7 610 L1105.6 620 L1123.3 630 M1111.1 612.2 L1135.6 598.9 L1145.6 608.9 L1162.2 623.3 M1117.8 617.8 L1128.9 623.3 L1142.2 626.7 M1131.1 617.8 L1145.6 608.9 L1147.8 600 L1153.3 590 M1097.8 631.1 L1120 642.2 M1098.9 647.8 L1104.4 638.9 L1108.9 641.1 L1106.7 647.8 M1108.9 652.2 L1114.4 643.3 L1118.9 645.6 M1175.6 590 L1180 596.7 L1197.8 612.2 L1206.7 617.8 M1157.8 590 L1175.6 610 L1180 626.7 M1197.8 612.2 L1211.1 601.1 L1231.1 590 M1208.9 610 L1227.8 600 L1231.1 594.4 M1040 702.2 L1047.8 707.8 L1052.2 715.6 L1054.4 722.2 M1161.1 654.3 L1221.4 635.8 L1238.2 639.5 L1253 637.6 L1264.2 650.6 L1269.8 669.2 L1264.2 680.4 L1247.5 680.4 L1227 672.9 M1163.8 661.8 L1227 645 L1241.9 654.3 L1247.5 680.4 M1178.7 667.3 L1234.5 652.5 M1182.4 650.6 L1188 667.3 M1193.6 646.9 L1199.1 663.6 M1206.6 643.2 L1212.2 659.9 M1219.6 639.5 L1225.2 661.8 L1241.9 678.5 M1245.6 641.3 L1256.8 672.9 M1253 654.3 L1262.3 676.6 M1156.4 669.2 L1154.5 687.8 L1163.8 700.8 L1160.1 710.1 L1171.3 725 L1175 728.7 M1163.8 667.3 L1175 669.2 L1184.3 676.6 L1193.6 684.1 L1186.1 695.2 L1175 698.9 L1165.7 691.5 L1163.8 676.6 M1169.4 676.6 L1178.7 684.1 L1176.8 691.5 M1199.1 663.6 L1195.4 684.1 L1184.3 698.9 L1175 713.8 L1182.4 726.8 M1191.7 684.1 L1206.6 691.5 L1212.2 708.2 M1167.6 710.1 L1182.4 704.5 L1189.9 713.8 L1182.4 721.2 L1173.1 717.5 M1175 728.7 L1163.8 747.3 L1145.3 771.4 L1154.5 778.8 M1182.4 726.8 L1188 738 L1201 745.4 L1208.4 758.4 L1212.2 771.4 L1182.4 782.6 L1173.1 778.8 M1171.3 743.5 L1182.4 758.4 L1197.3 765.8 M1163.8 754.7 L1175 769.6 L1178.7 780.7 M1201 745.4 L1232.6 732.4 L1236.3 739.8 L1210.3 751 M1175 736.1 L1193.6 741.7 M1182.4 773.3 L1188 758.4 M1191.7 777 L1197.3 754.7 M1201 773.3 L1204.7 747.3 M1208.4 752.8 L1230.7 743.5 M1182.4 633.9 L1189.9 643.2 M1241.9 684.1 L1262.3 702.7 L1290.2 706.4 L1310.7 726.8 M1079.3 731 L1071.8 742.2 L1061.9 757.1 L1054.4 768.3 L1051.3 777 L1049.4 793.1 L1045.7 806.8 L1042 811.7 L1038.3 814.2 M1093.3 733 L1091.7 739.7 L1084.2 759.6 L1078 774.5 L1071.8 793.1 L1061.9 813 L1051.9 826.6 L1034.5 850 L1033.3 853.4 M1080 732 L1090.4 739.7 M1078 773.2 L1085.5 774.5 L1086.7 781.9 L1076.8 781.9 M1044.5 808 L1059.4 812.4 L1061.9 818 L1074.3 824.2 L1085.5 798.1 M1186.1 672.9 L1238.2 658.1 M1201 676.6 L1241.9 665.5 M1171.3 654.3 L1175 667.3 M1228.9 641.3 L1238.2 667.3 M1236.3 639.5 L1249.3 672.9 M1251.2 641.3 L1262.3 672.9 M1258.6 646.9 L1266.1 667.3 M1227 672.9 L1241.9 684.1 L1258.6 684.1 M1160.1 676.6 L1160.1 691.5 L1169.4 702.7 M1171.3 684.1 L1182.4 691.5 M1163.8 715.7 L1175 728.7 M1178.7 708.2 L1186.1 717.5 M1163.8 747.3 L1178.7 756.5 L1186.1 765.8 M1156.4 762.1 L1169.4 777 M1178.7 747.3 L1197.3 752.8 M1186.1 739.8 L1191.7 754.7 M1175 765.8 L1193.6 773.3 M1182.4 728.7 L1197.3 743.5 M1214 747.3 L1234.5 738 M1195.4 743.5 L1201 758.4 L1202.9 775.1"/></defs>
<use href="#rd" fill="none" stroke="#fbe892" stroke-width="2.9" stroke-linejoin="round" stroke-linecap="round"/>
<use href="#rd" fill="none" stroke="#c6c6c6" stroke-width="1.35" stroke-dasharray="1.9 1.6" stroke-linejoin="round"/>
<circle cx="1181.5" cy="557" r="3.9" fill="#4b8a4f" stroke="#fff" stroke-width="1.3"/>
<text x="1187" y="552" font-family='"Liberation Sans", sans-serif' font-size="15.8" font-style="italic" fill="#fff" stroke="#5c5c5c" stroke-width="2.5" stroke-linejoin="round" paint-order="stroke">Swellendam</text>
<text x="1187" y="552" font-family='"Liberation Sans", sans-serif' font-size="15.8" font-style="italic" fill="#fff">Swellendam</text>
<circle cx="1208" cy="655.5" r="3.9" fill="#4b8a4f" stroke="#fff" stroke-width="1.3"/>
<text x="1212" y="650" font-family='"Liberation Sans", sans-serif' font-size="13.5" fill="#fff" stroke="#5c5c5c" stroke-width="2.5" stroke-linejoin="round" paint-order="stroke">Railton</text>
<text x="1212" y="650" font-family='"Liberation Sans", sans-serif' font-size="13.5" fill="#fff">Railton</text>
<circle cx="1437" cy="723.5" r="3.6" fill="#4b8a4f"/>
<text x="1439" y="719" font-family='"Liberation Sans", sans-serif' font-size="12" fill="#fff" stroke="#5c5c5c" stroke-width="2.5" stroke-linejoin="round" paint-order="stroke">Bontebok National Park Entrance Gate</text>
<text x="1439" y="719" font-family='"Liberation Sans", sans-serif' font-size="12" fill="#fff">Bontebok National Park Entrance Gate</text>
<circle cx="1444.5" cy="848.5" r="3.9" fill="#4b8a4f" stroke="#fff" stroke-width="1.3"/>
<text x="1448" y="843" font-family='"Liberation Sans", sans-serif' font-size="11.9" fill="#fff" stroke="#5c5c5c" stroke-width="2.5" stroke-linejoin="round" paint-order="stroke">Bontebok National Park Reception &amp; Shop</text>
<text x="1448" y="843" font-family='"Liberation Sans", sans-serif' font-size="11.9" fill="#fff">Bontebok National Park Reception &amp; Shop</text>
<circle cx="1292" cy="1015" r="3.9" fill="#4b8a4f" stroke="#fff" stroke-width="1.3"/>
<text x="1295" y="1011" font-family='"Liberation Sans", sans-serif' font-size="10.1" fill="#fff" stroke="#5c5c5c" stroke-width="2.5" stroke-linejoin="round" paint-order="stroke">Lang Elsies Kraal Rest Camp</text>
<text x="1295" y="1011" font-family='"Liberation Sans", sans-serif' font-size="10.1" fill="#fff">Lang Elsies Kraal Rest Camp</text>
<circle cx="1877" cy="751.5" r="3.6" fill="#4b8a4f"/>
<text x="1881" y="747" font-family='"Liberation Sans", sans-serif' font-size="15.5" font-style="italic" fill="#fff" stroke="#5c5c5c" stroke-width="2.5" stroke-linejoin="round" paint-order="stroke">Buffeljagsrivier</text>
<text x="1881" y="747" font-family='"Liberation Sans", sans-serif' font-size="15.5" font-style="italic" fill="#fff">Buffeljagsrivier</text>
</g>
<path d="M400.5 129 V1176.5 H1977" fill="none" stroke="#a9a9a9" stroke-width="1"/>
<defs><linearGradient id="pr" x1="0" y1="0" x2="0" y2="1"><stop offset="0" stop-color="#000" stop-opacity="0.3"/><stop offset="0.45" stop-color="#000" stop-opacity="0.12"/><stop offset="1" stop-color="#000" stop-opacity="0.22"/></linearGradient></defs><rect x="382.5" y="58" width="33.5" height="34" fill="url(#pr)"/><path d="M382.5 58 V92 M416 58 V92" stroke="#888" stroke-width="0.8" opacity="0.7"/>
<g transform="translate(73.44 61.54) scale(1.03)"><path d="M4.5 1.5 h10 l5 5 v16 h-15 z" fill="#fff" stroke="#666" stroke-width="1.1"/><path d="M14.5 1.5 v5 h5" fill="#eee" stroke="#666" stroke-width="0.9"/></g>
<g transform="translate(111.34 61.54) scale(1.03)"><path d="M2.5 5 h7 l1.5 2 h9 v3 h-17.5 z" fill="#e8c33a" stroke="#c9a21c" stroke-width="0.9"/><path d="M2.5 21.5 L4.5 9.5 H23.5 L21 21.5 Z" fill="#fbd84a" stroke="#d0a820" stroke-width="1"/></g>
<g transform="translate(149.34 61.54) scale(1.03)"><rect x="2.5" y="2.5" width="19" height="19.5" rx="2" fill="#6694cf" stroke="#4674b2" stroke-width="1.2"/><rect x="6" y="3.2" width="12" height="8.5" fill="#f4f4f4" stroke="#b8b8b8" stroke-width="0.6"/><path d="M7.5 5.5 h9 M7.5 7.5 h9 M7.5 9.5 h9" stroke="#555" stroke-width="0.9"/><rect x="7" y="15" width="10.5" height="6.3" fill="#f0f0f0"/><rect x="8.6" y="16" width="2.6" height="4.3" fill="#2c4d80"/></g>
<g transform="translate(188.04 61.54) scale(1.03)"><rect x="2.5" y="2.5" width="19" height="19.5" rx="2" fill="#6694cf" stroke="#4674b2" stroke-width="1.2"/><rect x="6" y="3.2" width="12" height="8.5" fill="#f4f4f4" stroke="#b8b8b8" stroke-width="0.6"/><path d="M7.5 5.5 h9 M7.5 7.5 h9 M7.5 9.5 h9" stroke="#555" stroke-width="0.9"/><rect x="7" y="15" width="10.5" height="6.3" fill="#f0f0f0"/><rect x="8.6" y="16" width="2.6" height="4.3" fill="#2c4d80"/><rect x="14.5" y="14.5" width="9.5" height="9.5" rx="2" fill="#4c9448" stroke="#3a7a36" stroke-width="0.8"/><path d="M17 21 l4.5 -4.5" stroke="#fff" stroke-width="2" stroke-linecap="round"/></g>
<g transform="translate(225.44 61.54) scale(1.03)"><path d="M2 3.5 h14 l5 5 v9.5 h-19 z" fill="#fff" stroke="#777" stroke-width="1"/><path d="M16 3.5 v5 h5" fill="#eee" stroke="#777" stroke-width="0.8"/><g><rect x="14" y="14" width="9" height="9" rx="2" fill="#e3b81c" stroke="#c79a10" stroke-width="0.8"/><path d="M18.5 15.3 v6.4 M15.7 16.9 l5.6 3.2 M15.7 20.1 l5.6 -3.2" stroke="#fff" stroke-width="1.3"/></g></g>
<g transform="translate(263.44 61.54) scale(1.03)"><path d="M2 3.5 h14 l5 5 v9.5 h-19 z" fill="#fff" stroke="#777" stroke-width="1"/><path d="M16 3.5 v5 h5" fill="#eee" stroke="#777" stroke-width="0.8"/><path d="M9 7.5 a3 3 0 1 0 4 4 l7.5 8 l2 -2 l-8 -7.5 a3 3 0 0 0 -3.5 -3.8 l2 2 l-2.2 2.2 z" fill="#e8c656" stroke="#555" stroke-width="0.9"/><path d="M8.5 6.5 a3.4 3.4 0 1 0 5 4.6" fill="none" stroke="#666" stroke-width="1.4"/></g>
<g transform="translate(311.04 61.54) scale(1.03)"><path d="M7 13 L4.5 10 C3.5 8.8 5.2 7.6 6.3 8.6 L8.6 11 V4.2 C8.6 2.8 10.8 2.8 10.8 4.2 V3 C10.8 1.6 13.1 1.6 13.1 3 V3.8 C13.1 2.5 15.3 2.5 15.3 3.9 V5.4 C15.3 4.2 17.5 4.2 17.5 5.6 V14 C17.5 18 16 19.5 15.5 22 H9 C8.6 19.5 7 16 7 13 Z" fill="#fff" stroke="#111" stroke-width="1.1" stroke-linejoin="round"/><path d="M10.8 4.5 V11 M13.1 4 V11 M15.3 5.5 V11.5" stroke="#111" stroke-width="0.9"/></g>
<g transform="translate(347.94 61.54) scale(1.03)"><rect x="3.5" y="1.5" width="13" height="11" fill="#f5e04a" stroke="#333" stroke-width="1" stroke-dasharray="2 1.5"/><path d="M12 2.5 l4 4.5 h-2.4 v3 h-3.2 v-3 h-2.4 z M12 22.5 l4 -4.5 h-2.4 v-3 h-3.2 v3 h-2.4 z M1.5 12 l4.5 -4 v2.4 h3 v3.2 h-3 v2.4 z M22.5 12 l-4.5 -4 v2.4 h-3 v3.2 h3 v2.4 z" fill="#5b8fd0" stroke="#3a68a8" stroke-width="0.6"/></g>
<g transform="translate(386.64 61.54) scale(1.03)"><g><path d="M9.4 14.8 L2.8 21.4" stroke="#4a4a3a" stroke-width="3.3" stroke-linecap="round"/><path d="M9 15.2 L3 21.2" stroke="#f2c832" stroke-width="1.9" stroke-linecap="round"/><circle cx="15" cy="9" r="7.9" fill="#fdfdfd" stroke="#8c8c8c" stroke-width="1.2"/><circle cx="9.7" cy="14.4" r="1.5" fill="#222"/></g><path d="M15 3.9 v10.2 M9.9 9 h10.2" stroke="#4f84c8" stroke-width="2.6"/></g>
<g transform="translate(424.04 61.54) scale(1.03)"><g><path d="M9.4 14.8 L2.8 21.4" stroke="#4a4a3a" stroke-width="3.3" stroke-linecap="round"/><path d="M9 15.2 L3 21.2" stroke="#f2c832" stroke-width="1.9" stroke-linecap="round"/><circle cx="15" cy="9" r="7.9" fill="#fdfdfd" stroke="#8c8c8c" stroke-width="1.2"/><circle cx="9.7" cy="14.4" r="1.5" fill="#222"/></g><path d="M9.9 9 h10.2" stroke="#4f84c8" stroke-width="2.6"/></g>
<g transform="translate(462.04 61.54) scale(1.03)"><g opacity="0.55"><path d="M9.4 14.8 L2.8 21.4" stroke="#4a4a3a" stroke-width="3.3" stroke-linecap="round"/><path d="M9 15.2 L3 21.2" stroke="#f2c832" stroke-width="1.9" stroke-linecap="round"/><circle cx="15" cy="9" r="7.9" fill="#fdfdfd" stroke="#8c8c8c" stroke-width="1.2"/><circle cx="9.7" cy="14.4" r="1.5" fill="#222"/></g><text x="9.3" y="12.4" font-family="Liberation Sans, sans-serif" font-weight="bold" font-size="9.5" fill="#a6a6a6">1:1</text></g>
<g transform="translate(500.84 61.54) scale(1.03)"><path d="M1.5 1.5 h8 l-2.6 2.6 l3.5 3.5 l-2.8 2.8 l-3.5 -3.5 l-2.6 2.6 z M22.5 1.5 v8 l-2.6 -2.6 l-3.5 3.5 l-2.8 -2.8 l3.5 -3.5 l-2.6 -2.6 z M22.5 21.5 h-8 l2.6 -2.6 l-3.5 -3.5 l2.8 -2.8 l3.5 3.5 l2.6 -2.6 z" fill="#4e86cc" stroke="#2f5f9e" stroke-width="0.6"/><g><path d="M9.4 14.8 L2.8 21.4" stroke="#4a4a3a" stroke-width="3.3" stroke-linecap="round"/><path d="M9 15.2 L3 21.2" stroke="#f2c832" stroke-width="1.9" stroke-linecap="round"/><circle cx="15" cy="9" r="7.9" fill="#f4f4f4" stroke="#8c8c8c" stroke-width="1.2"/><circle cx="9.7" cy="14.4" r="1.5" fill="#222"/></g></g>
<g transform="translate(538.74 61.54) scale(1.03)"><rect x="2" y="3" width="12" height="12" fill="#f5e04a" stroke="#333" stroke-width="1" stroke-dasharray="2 1.5"/><g><path d="M9.4 14.8 L2.8 21.4" stroke="#4a4a3a" stroke-width="3.3" stroke-linecap="round"/><path d="M9 15.2 L3 21.2" stroke="#f2c832" stroke-width="1.9" stroke-linecap="round"/><circle cx="15" cy="9" r="7.9" fill="rgba(250,250,240,0.82)" stroke="#8c8c8c" stroke-width="1.2"/><circle cx="9.7" cy="14.4" r="1.5" fill="#222"/></g></g>
<g transform="translate(576.54 61.54) scale(1.03)"><rect x="6" y="6" width="14" height="13" fill="#d8d0d8" stroke="#888" stroke-width="0.8"/><g><path d="M9.4 14.8 L2.8 21.4" stroke="#4a4a3a" stroke-width="3.3" stroke-linecap="round"/><path d="M9 15.2 L3 21.2" stroke="#f2c832" stroke-width="1.9" stroke-linecap="round"/><circle cx="15" cy="9" r="7.9" fill="rgba(252,252,252,0.85)" stroke="#8c8c8c" stroke-width="1.2"/><circle cx="9.7" cy="14.4" r="1.5" fill="#222"/></g></g>
<g transform="translate(614.44 61.54) scale(1.03)"><g><path d="M9.4 14.8 L2.8 21.4" stroke="#4a4a3a" stroke-width="3.3" stroke-linecap="round"/><path d="M9 15.2 L3 21.2" stroke="#f2c832" stroke-width="1.9" stroke-linecap="round"/><circle cx="15" cy="9" r="7.9" fill="#fdfdfd" stroke="#8c8c8c" stroke-width="1.2"/><circle cx="9.7" cy="14.4" r="1.5" fill="#222"/></g><rect x="12.5" y="13.5" width="10" height="9" fill="#4a7fc4" stroke="#2f5f9e" stroke-width="0.6"/><path d="M20 15.5 l-5 2.5 l5 2.5" stroke="#fff" stroke-width="1.6" fill="none"/></g>
<g transform="translate(652.84 61.54) scale(1.03)"><g opacity="0.55"><path d="M9.4 14.8 L2.8 21.4" stroke="#4a4a3a" stroke-width="3.3" stroke-linecap="round"/><path d="M9 15.2 L3 21.2" stroke="#f2c832" stroke-width="1.9" stroke-linecap="round"/><circle cx="15" cy="9" r="7.9" fill="#fdfdfd" stroke="#8c8c8c" stroke-width="1.2"/><circle cx="9.7" cy="14.4" r="1.5" fill="#222"/></g><g opacity="0.6"><rect x="12.5" y="13.5" width="10" height="9" fill="#4a7fc4" stroke="#2f5f9e" stroke-width="0.6"/><path d="M15 15.5 l5 2.5 l-5 2.5" stroke="#fff" stroke-width="1.6" fill="none"/></g></g>
<g transform="translate(690.54 61.54) scale(1.03)"><path d="M3 11 A9 9 0 0 1 19 5.5 L21.5 2.5 V10.5 H13.5 L16.4 8 A5.5 5.5 0 0 0 7 11 Z" fill="#4f8ad0" stroke="#2f65a8" stroke-width="0.8"/><path d="M21 13 A9 9 0 0 1 5 18.5 L2.5 21.5 V13.5 H10.5 L7.6 16 A5.5 5.5 0 0 0 17 13 Z" fill="#4f8ad0" stroke="#2f65a8" stroke-width="0.8"/></g>
<g transform="translate(736.44 61.54) scale(1.03)"><circle cx="10" cy="9.5" r="8" fill="#3f78c4" stroke="#2c5c9e" stroke-width="0.8"/><text x="7.2" y="14" font-family="Liberation Serif, serif" font-style="italic" font-weight="bold" font-size="13" fill="#fff">i</text><path transform="translate(13.5 10.5) scale(1.0)" d="M0 0 V11 L2.6 8.6 L4.6 13 L6.4 12.2 L4.4 7.9 L8 7.9 Z" fill="#fff" stroke="#222" stroke-width="0.9" stroke-linejoin="round"/></g>
<g transform="translate(780.64 61.54) scale(1.03)"><g opacity="0.55"><circle cx="11" cy="10" r="8" fill="#e4e4e4" stroke="#888" stroke-width="1" stroke-dasharray="2.4 1.4"/><circle cx="11" cy="10" r="5.2" fill="#6c9bd8" stroke="#4a78b8"/><path d="M9.3 7.2 l4.8 2.8 l-4.8 2.8 z" fill="#fff"/></g><g opacity="0.7"><path transform="translate(14 11) scale(0.95)" d="M0 0 V11 L2.6 8.6 L4.6 13 L6.4 12.2 L4.4 7.9 L8 7.9 Z" fill="#fff" stroke="#222" stroke-width="0.9" stroke-linejoin="round"/></g></g>
<g transform="translate(829.34 61.54) scale(1.03)"><rect x="2" y="2" width="11" height="11" fill="#f7e23c" stroke="#c9a800" stroke-width="0.9"/><rect x="15" y="2" width="6" height="11" fill="#eee" stroke="#999" stroke-width="0.8"/><rect x="2" y="15.5" width="12" height="6" fill="#eee" stroke="#999" stroke-width="0.8"/><path transform="translate(9 7.5) scale(1.05)" d="M0 0 V11 L2.6 8.6 L4.6 13 L6.4 12.2 L4.4 7.9 L8 7.9 Z" fill="#fff" stroke="#222" stroke-width="0.9" stroke-linejoin="round"/></g>
<g transform="translate(876.64 61.54) scale(1.03)"><rect x="2" y="3" width="13.5" height="13.5" fill="#f7e23c" stroke="#c9a800" stroke-width="1" stroke-dasharray="2 1.3"/><rect x="12" y="13" width="10" height="10" rx="2.5" fill="#e02a2a" stroke="#b01818" stroke-width="0.8"/><circle cx="17" cy="18" r="2.8" fill="none" stroke="#fff" stroke-width="1.3"/><path d="M15 20 l4 -4" stroke="#fff" stroke-width="1.3"/></g>
<g transform="translate(915.04 61.54) scale(1.03)"><rect x="10" y="11" width="12" height="12" fill="#f7e23c" stroke="#c9a800" stroke-width="1" stroke-dasharray="2 1.3"/><text x="0" y="15.5" font-family="Liberation Serif, serif" font-size="25" fill="#6a2a7a">ε</text></g>
<g transform="translate(951.54 61.54) scale(1.03)"><rect x="2.5" y="2.5" width="19" height="19" fill="#fff" stroke="#2f4f7a" stroke-width="1.3"/><rect x="3" y="3" width="18" height="3.4" fill="#5b86c0"/><path d="M4.5 9 h3 M4.5 12 h3 M4.5 15 h3 M4.5 18 h3 M9.5 9 h10 M9.5 12 h10 M9.5 15 h10 M9.5 18 h10" stroke="#2f4f7a" stroke-width="1.5"/></g>
<g transform="translate(989.64 61.54) scale(1.03)"><g opacity="0.6"><path d="M2.5 1.5 V22.5 H21.5 V1.5" fill="none" stroke="#888" stroke-width="1.2"/><path d="M1 22.5 h22" stroke="#777" stroke-width="1.6"/><path d="M3 5 h18 M3 11 h18 M3 17 h18" stroke="#999" stroke-width="0.8"/><circle cx="11" cy="5" r="2.2" fill="#f4c0c0" stroke="#c04040"/><circle cx="16" cy="5" r="2.2" fill="#f4c0c0" stroke="#c04040"/><circle cx="6" cy="11" r="2.2" fill="#c8e4c0" stroke="#5a9a4a"/><circle cx="11" cy="11" r="2.2" fill="#c8e4c0" stroke="#5a9a4a"/><circle cx="13" cy="17" r="2.2" fill="#c4d8f0" stroke="#4a78b8"/><circle cx="18" cy="17" r="2.2" fill="#c4d8f0" stroke="#4a78b8"/></g></g>
<g transform="translate(1033.84 61.54) scale(1.03)"><path d="M3 5 v5 M21 5 v5 M3 7.5 h18" stroke="#2c5a88" stroke-width="1.5"/><rect x="1.5" y="13" width="21" height="7.5" fill="#d8d8d0" stroke="#666" stroke-width="1"/><path d="M4 13 v3.5 M6.5 13 v2.2 M9 13 v3.5 M11.5 13 v2.2 M14 13 v3.5 M16.5 13 v2.2 M19 13 v3.5" stroke="#444" stroke-width="0.9"/></g>
<g transform="translate(1077.34 61.54) scale(1.03)"><path d="M3 3.5 Q3 2 5 2 H19 Q21.5 2 21.5 4.5 V12 Q21.5 14.5 19 14.5 H12 L7 20 L8 14.5 H5 Q3 14.5 3 12 Z" fill="#fbdc50" stroke="#c8a420" stroke-width="1"/></g>
<g transform="translate(1116.94 61.54) scale(1.03)"><rect x="3" y="6" width="15" height="11" fill="none" stroke="#444" stroke-width="1" stroke-dasharray="1.2 1.2"/><path d="M11 6 V3.5 L13.5 1.5 H17 V6 Z" fill="#f5d63a" stroke="#c9a100" stroke-width="0.8"/><g><rect x="13.5" y="13.5" width="9" height="9" rx="2" fill="#e3b81c" stroke="#c79a10" stroke-width="0.8"/><path d="M18.0 14.8 v6.4 M15.2 16.4 l5.6 3.2 M15.2 19.6 l5.6 -3.2" stroke="#fff" stroke-width="1.3"/></g></g>
<g transform="translate(1152.74 61.54) scale(1.03)"><rect x="3" y="6" width="15" height="11" fill="none" stroke="#444" stroke-width="1" stroke-dasharray="1.2 1.2"/><path d="M11 6 V3.5 L13.5 1.5 H17 V6 Z" fill="#f5d63a" stroke="#c9a100" stroke-width="0.8"/></g>
<g transform="translate(1198.74 61.54) scale(1.03)"><path d="M4 2 H21 V15 H10 L2 22 L6 15 H4 Z" fill="#dfe6ee" stroke="#777" stroke-width="1.1"/><text x="8" y="12.5" font-family="Liberation Serif, serif" font-weight="bold" font-size="11.5" fill="#333">T</text></g>
<g transform="translate(1250.64 61.54) scale(1.03)"><rect x="2.5" y="1.5" width="19" height="21" rx="1" fill="#4f7fc0" stroke="#26436e" stroke-width="1"/><rect x="2.5" y="1.5" width="4.6" height="21" fill="#1e2f4e"/><text x="10.5" y="17" font-family="Liberation Serif, serif" font-size="14" fill="#fff">?</text></g>
<g transform="translate(1288.24 61.54) scale(1.03)"><path transform="translate(1 1) scale(1.3)" d="M0 0 V11 L2.6 8.6 L4.6 13 L6.4 12.2 L4.4 7.9 L8 7.9 Z" fill="#fff" stroke="#222" stroke-width="0.9" stroke-linejoin="round"/><text x="10.5" y="22.5" font-family="Liberation Serif, serif" font-size="25" fill="#111">?</text></g>
<path d="M808 74.8 h7.6 l-3.8 5.6 z" fill="#4a4a4a"/>
<path d="M858.5 74.8 h7.6 l-3.8 5.6 z" fill="#4a4a4a"/>
<path d="M1060.5 74.8 h7.6 l-3.8 5.6 z" fill="#4a4a4a"/>
<path d="M1224.5 74.8 h7.6 l-3.8 5.6 z" fill="#4a4a4a"/>
<rect x="65.9" y="63.9" width="1.8" height="1.8" fill="#fff"/><rect x="65" y="63" width="1.7" height="1.7" fill="#b4b4b4"/><rect x="68.30000000000001" y="66.9" width="1.8" height="1.8" fill="#fff"/><rect x="67.4" y="66" width="1.7" height="1.7" fill="#b4b4b4"/><rect x="65.9" y="69.9" width="1.8" height="1.8" fill="#fff"/><rect x="65" y="69" width="1.7" height="1.7" fill="#b4b4b4"/><rect x="68.30000000000001" y="72.9" width="1.8" height="1.8" fill="#fff"/><rect x="67.4" y="72" width="1.7" height="1.7" fill="#b4b4b4"/><rect x="65.9" y="75.9" width="1.8" height="1.8" fill="#fff"/><rect x="65" y="75" width="1.7" height="1.7" fill="#b4b4b4"/><rect x="68.30000000000001" y="78.9" width="1.8" height="1.8" fill="#fff"/><rect x="67.4" y="78" width="1.7" height="1.7" fill="#b4b4b4"/><rect x="65.9" y="81.9" width="1.8" height="1.8" fill="#fff"/><rect x="65" y="81" width="1.7" height="1.7" fill="#b4b4b4"/><rect x="68.30000000000001" y="84.9" width="1.8" height="1.8" fill="#fff"/><rect x="67.4" y="84" width="1.7" height="1.7" fill="#b4b4b4"/>
<rect x="302.4" y="63.9" width="1.8" height="1.8" fill="#fff"/><rect x="301.5" y="63" width="1.7" height="1.7" fill="#b4b4b4"/><rect x="304.79999999999995" y="66.9" width="1.8" height="1.8" fill="#fff"/><rect x="303.9" y="66" width="1.7" height="1.7" fill="#b4b4b4"/><rect x="302.4" y="69.9" width="1.8" height="1.8" fill="#fff"/><rect x="301.5" y="69" width="1.7" height="1.7" fill="#b4b4b4"/><rect x="304.79999999999995" y="72.9" width="1.8" height="1.8" fill="#fff"/><rect x="303.9" y="72" width="1.7" height="1.7" fill="#b4b4b4"/><rect x="302.4" y="75.9" width="1.8" height="1.8" fill="#fff"/><rect x="301.5" y="75" width="1.7" height="1.7" fill="#b4b4b4"/><rect x="304.79999999999995" y="78.9" width="1.8" height="1.8" fill="#fff"/><rect x="303.9" y="78" width="1.7" height="1.7" fill="#b4b4b4"/><rect x="302.4" y="81.9" width="1.8" height="1.8" fill="#fff"/><rect x="301.5" y="81" width="1.7" height="1.7" fill="#b4b4b4"/><rect x="304.79999999999995" y="84.9" width="1.8" height="1.8" fill="#fff"/><rect x="303.9" y="84" width="1.7" height="1.7" fill="#b4b4b4"/>
<rect x="729.9" y="63.9" width="1.8" height="1.8" fill="#fff"/><rect x="729" y="63" width="1.7" height="1.7" fill="#b4b4b4"/><rect x="732.3" y="66.9" width="1.8" height="1.8" fill="#fff"/><rect x="731.4" y="66" width="1.7" height="1.7" fill="#b4b4b4"/><rect x="729.9" y="69.9" width="1.8" height="1.8" fill="#fff"/><rect x="729" y="69" width="1.7" height="1.7" fill="#b4b4b4"/><rect x="732.3" y="72.9" width="1.8" height="1.8" fill="#fff"/><rect x="731.4" y="72" width="1.7" height="1.7" fill="#b4b4b4"/><rect x="729.9" y="75.9" width="1.8" height="1.8" fill="#fff"/><rect x="729" y="75" width="1.7" height="1.7" fill="#b4b4b4"/><rect x="732.3" y="78.9" width="1.8" height="1.8" fill="#fff"/><rect x="731.4" y="78" width="1.7" height="1.7" fill="#b4b4b4"/><rect x="729.9" y="81.9" width="1.8" height="1.8" fill="#fff"/><rect x="729" y="81" width="1.7" height="1.7" fill="#b4b4b4"/><rect x="732.3" y="84.9" width="1.8" height="1.8" fill="#fff"/><rect x="731.4" y="84" width="1.7" height="1.7" fill="#b4b4b4"/>
<rect x="1241.9" y="63.9" width="1.8" height="1.8" fill="#fff"/><rect x="1241" y="63" width="1.7" height="1.7" fill="#b4b4b4"/><rect x="1244.3000000000002" y="66.9" width="1.8" height="1.8" fill="#fff"/><rect x="1243.4" y="66" width="1.7" height="1.7" fill="#b4b4b4"/><rect x="1241.9" y="69.9" width="1.8" height="1.8" fill="#fff"/><rect x="1241" y="69" width="1.7" height="1.7" fill="#b4b4b4"/><rect x="1244.3000000000002" y="72.9" width="1.8" height="1.8" fill="#fff"/><rect x="1243.4" y="72" width="1.7" height="1.7" fill="#b4b4b4"/><rect x="1241.9" y="75.9" width="1.8" height="1.8" fill="#fff"/><rect x="1241" y="75" width="1.7" height="1.7" fill="#b4b4b4"/><rect x="1244.3000000000002" y="78.9" width="1.8" height="1.8" fill="#fff"/><rect x="1243.4" y="78" width="1.7" height="1.7" fill="#b4b4b4"/><rect x="1241.9" y="81.9" width="1.8" height="1.8" fill="#fff"/><rect x="1241" y="81" width="1.7" height="1.7" fill="#b4b4b4"/><rect x="1244.3000000000002" y="84.9" width="1.8" height="1.8" fill="#fff"/><rect x="1243.4" y="84" width="1.7" height="1.7" fill="#b4b4b4"/>
<g transform="translate(75.04 97.64) scale(1.03)"><g opacity="0.55"><g transform="translate(-3 0)"><path d="M15 1.5 L20 4 L9 20 L4.5 22.5 L4.5 17.5 Z" fill="#e8a070" stroke="#8a8a6a" stroke-width="0.8"/><path d="M16.8 2.6 L7 18.5" stroke="#f0c060" stroke-width="1.6"/><path d="M4.5 17.5 L9 20 L4.5 22.5 Z" fill="#ddd" stroke="#888" stroke-width="0.6"/><path d="M4.5 20.8 l1.6 0.8 l-1.6 0.9 z" fill="#333"/></g><g transform="translate(2 0)"><path d="M15 1.5 L20 4 L9 20 L4.5 22.5 L4.5 17.5 Z" fill="#e8885a" stroke="#8a8a6a" stroke-width="0.8"/><path d="M16.8 2.6 L7 18.5" stroke="#f0c060" stroke-width="1.6"/><path d="M4.5 17.5 L9 20 L4.5 22.5 Z" fill="#ddd" stroke="#888" stroke-width="0.6"/><path d="M4.5 20.8 l1.6 0.8 l-1.6 0.9 z" fill="#333"/></g></g></g>
<g transform="translate(111.34 97.64) scale(1.03)"><g transform="translate(0 0)"><path d="M15 1.5 L20 4 L9 20 L4.5 22.5 L4.5 17.5 Z" fill="#f4dc28" stroke="#8a8a6a" stroke-width="0.8"/><path d="M16.8 2.6 L7 18.5" stroke="#c8a800" stroke-width="1.6"/><path d="M4.5 17.5 L9 20 L4.5 22.5 Z" fill="#ddd" stroke="#888" stroke-width="0.6"/><path d="M4.5 20.8 l1.6 0.8 l-1.6 0.9 z" fill="#333"/></g></g>
<g transform="translate(149.34 97.64) scale(1.03)"><g opacity="0.45"><rect x="2.5" y="2.5" width="19" height="19.5" rx="2" fill="#6694cf" stroke="#4674b2" stroke-width="1.2"/><rect x="6" y="3.2" width="12" height="8.5" fill="#f4f4f4" stroke="#b8b8b8" stroke-width="0.6"/><path d="M7.5 5.5 h9 M7.5 7.5 h9 M7.5 9.5 h9" stroke="#555" stroke-width="0.9"/><rect x="7" y="15" width="10.5" height="6.3" fill="#f0f0f0"/><rect x="8.6" y="16" width="2.6" height="4.3" fill="#2c4d80"/></g><g opacity="0.7" transform="translate(10 8) scale(0.62)"><g transform="translate(0 0)"><path d="M15 1.5 L20 4 L9 20 L4.5 22.5 L4.5 17.5 Z" fill="#e8885a" stroke="#8a8a6a" stroke-width="0.8"/><path d="M16.8 2.6 L7 18.5" stroke="#f0c060" stroke-width="1.6"/><path d="M4.5 17.5 L9 20 L4.5 22.5 Z" fill="#ddd" stroke="#888" stroke-width="0.6"/><path d="M4.5 20.8 l1.6 0.8 l-1.6 0.9 z" fill="#333"/></g></g></g>
<g transform="translate(188.04 97.64) scale(1.03)"><g opacity="0.55"><path d="M3 6.5 C3 2.5 9 2 12 4 C15 5.5 18.5 3 21 5 C23 7 21.5 12 18 12.5 C15 13 13 10.5 10 11.5 C6 13 3 10.5 3 6.5 Z" fill="#a9d3ad" stroke="#8c9c8e" stroke-width="1"/></g><g opacity="0.6"><rect x="14" y="14" width="9" height="9" rx="2" fill="#e3b81c" stroke="#c79a10" stroke-width="0.8"/><path d="M18.5 15.3 v6.4 M15.7 16.9 l5.6 3.2 M15.7 20.1 l5.6 -3.2" stroke="#fff" stroke-width="1.3"/></g></g>
<g transform="translate(226.04 97.64) scale(1.03)"><g opacity="0.55"><path d="M3 6.5 C3 2.5 9 2 12 4 C15 5.5 18.5 3 21 5 C23 7 21.5 12 18 12.5 C15 13 13 10.5 10 11.5 C6 13 3 10.5 3 6.5 Z" fill="#a9d3ad" stroke="#8c9c8e" stroke-width="1"/></g><g opacity="0.6"><rect x="14" y="14" width="9" height="9" rx="2" fill="#4a78b8" stroke="#3a62a0" stroke-width="0.8"/><path d="M15.5 18.5 h3.5 v-2.2 l3 2.2 l-3 2.2 v-2.2" fill="#fff" stroke="#fff" stroke-width="0.8"/></g></g>
<g transform="translate(263.84 97.64) scale(1.03)"><g opacity="0.6"><path d="M2 21 L8 5.5 H20" fill="none" stroke="#555" stroke-width="1"/><circle cx="8" cy="5.5" r="2.4" fill="#a8d4a8" stroke="#6a9a6a"/><path d="M11 21 L20 11" stroke="#d8a040" stroke-width="2.6"/><path d="M12 11 L21 21" stroke="#8a6a3a" stroke-width="2.2"/><path d="M9.5 12.5 l3.5 -3.5 l2 2 l-3.5 3.5 z" fill="#999"/></g></g>
<g transform="translate(302.14 98.64) scale(1.03)"><g opacity="0.55"><rect x="2.5" y="2.5" width="13" height="13" fill="#f7e23c" stroke="#c9a800" stroke-width="1" stroke-dasharray="2 1.3"/></g><g opacity="0.7"><rect x="13" y="13" width="9.5" height="9.5" rx="2" fill="#e04848" stroke="#b82828" stroke-width="0.8"/><path d="M15.3 15.3 l5 5 M20.3 15.3 l-5 5" stroke="#fff" stroke-width="1.7"/></g></g>
<g transform="translate(339.94 98.64) scale(1.03)"><g opacity="0.55"><path d="M1.5 6 L17 14 M2.5 12.5 L17 9.5" stroke="#888" stroke-width="1.6"/><ellipse cx="19.5" cy="8.5" rx="3" ry="2.2" fill="none" stroke="#d03030" stroke-width="1.5" transform="rotate(-20 19.5 8.5)"/><ellipse cx="19.5" cy="16" rx="3" ry="2.2" fill="none" stroke="#d03030" stroke-width="1.5" transform="rotate(30 19.5 16)"/></g></g>
<g transform="translate(376.24 98.64) scale(1.03)"><g opacity="0.45"><path d="M9 2.5 h7 l3.5 3.5 v11 h-10.5 z" fill="#fafafa" stroke="#777"/><path d="M4.5 6.5 h7 l3.5 3.5 v11.5 h-10.5 z" fill="#fff" stroke="#666"/><path d="M6.5 12 h6.5 M6.5 14.5 h6.5 M6.5 17 h6.5 M6.5 19.5 h6.5" stroke="#777" stroke-width="0.8"/></g></g>
<g transform="translate(415.64 98.64) scale(1.03)"><g opacity="0.5"><rect x="4" y="4" width="16" height="18.5" rx="1" fill="#f0d8b8" stroke="#c89858" stroke-width="1.1"/><rect x="8.5" y="2" width="7" height="4" fill="#ddd" stroke="#999" stroke-width="0.8"/><rect x="7" y="8" width="10" height="12" fill="#fff" stroke="#888" stroke-width="0.7"/><path d="M8.5 11 h7 M8.5 13.5 h7 M8.5 16 h7 M8.5 18.5 h7" stroke="#777" stroke-width="0.8"/></g></g>
<g transform="translate(461.44 98.64) scale(1.03)"><g><path d="M1 9.5 L5.5 4 H21.5 V15 H5.5 Z" fill="#f5d63a" stroke="#c9a100" stroke-width="1"/><text x="5.6" y="13" font-family="Liberation Sans, sans-serif" font-weight="bold" font-size="8.5" fill="#222">abc</text></g></g>
<g transform="translate(500.84 98.64) scale(1.03)"><rect x="0.3" y="4.2" width="23.4" height="17.6" fill="#cfe0fa" stroke="#7aa4e0" stroke-width="0.9"/><g><path d="M1.5 11.0 L6.0 5.5 H18.0 V16.5 H6.0 Z" fill="#f5d63a" stroke="#c9a100" stroke-width="1"/><text x="6.1" y="14.5" font-family="Liberation Sans, sans-serif" font-weight="bold" font-size="8.5" fill="#222">ab</text></g><g transform="translate(1 1.5)"><g opacity="1"><path d="M16.5 8 L16 16" stroke="#ddd" stroke-width="2.4"/><circle cx="16.5" cy="18" r="4.3" fill="#c8202c" stroke="#8a1018" stroke-width="0.7"/></g></g></g>
<g transform="translate(538.74 98.64) scale(1.03)"><g opacity="0.5"><path d="M1 8.5 L5.5 3 H19 V14 H5.5 Z" fill="#f5d63a" stroke="#c9a100" stroke-width="1"/><text x="5.6" y="12" font-family="Liberation Sans, sans-serif" font-weight="bold" font-size="8.5" fill="#222">ab</text></g><g opacity="0.55"><path d="M16.5 8 L16 16" stroke="#ddd" stroke-width="2.4"/><circle cx="16.5" cy="18" r="4.3" fill="#c8202c" stroke="#8a1018" stroke-width="0.7"/></g></g>
<g transform="translate(576.54 98.64) scale(1.03)"><g opacity="0.5"><path d="M1 8.5 L5.5 3 H20.5 V14 H5.5 Z" fill="#f5d63a" stroke="#c9a100" stroke-width="1"/><text x="5.6" y="12" font-family="Liberation Sans, sans-serif" font-weight="bold" font-size="8.5" fill="#222">abc</text></g><g opacity="0.6"><path d="M7.5 19 Q14 12.5 21.5 19 Q14 24.5 7.5 19 Z" fill="#fff" stroke="#777" stroke-width="0.9"/><circle cx="14.5" cy="18.8" r="2.6" fill="#5b86c0"/><circle cx="14.5" cy="18.8" r="1" fill="#123"/></g></g>
<g transform="translate(614.44 98.64) scale(1.03)"><g opacity="0.5"><path d="M1 8.5 L5.5 3 H20.5 V14 H5.5 Z" fill="#f5d63a" stroke="#c9a100" stroke-width="1"/><text x="5.6" y="12" font-family="Liberation Sans, sans-serif" font-weight="bold" font-size="8.5" fill="#222">abc</text></g><g opacity="0.6"><rect x="13.5" y="13" width="9" height="9" rx="2" fill="#4a78b8" stroke="#3a62a0" stroke-width="0.8"/><path d="M15.0 17.5 h3.5 v-2.2 l3 2.2 l-3 2.2 v-2.2" fill="#fff" stroke="#fff" stroke-width="0.8"/></g></g>
<g transform="translate(652.84 98.64) scale(1.03)"><g opacity="0.5"><path d="M1 8.5 L5.5 3 H20.5 V14 H5.5 Z" fill="#f5d63a" stroke="#c9a100" stroke-width="1"/><text x="5.6" y="12" font-family="Liberation Sans, sans-serif" font-weight="bold" font-size="8.5" fill="#222">abc</text></g><g opacity="0.6"><rect x="13.5" y="13" width="9" height="9" rx="2" fill="#4a78b8" stroke="#3a62a0" stroke-width="0.8"/><path d="M20.5 17.5 a2.5 2.5 0 1 0 -2.5 2.6" fill="none" stroke="#fff" stroke-width="1.3"/><path d="M19 15.5 l2 2 l1 -2.5 z" fill="#fff"/></g></g>
<g transform="translate(690.54 98.64) scale(1.03)"><g opacity="0.5"><path d="M1 8.5 L5.5 3 H20.5 V14 H5.5 Z" fill="#f5d63a" stroke="#c9a100" stroke-width="1"/><text x="5.6" y="12" font-family="Liberation Sans, sans-serif" font-weight="bold" font-size="8.5" fill="#222">abc</text></g><g opacity="0.6"><rect x="13.5" y="13" width="9" height="9" rx="2" fill="#e3c030" stroke="#c79a10" stroke-width="0.8"/><path d="M15.5 20.5 l5 -5" stroke="#fff" stroke-width="2" stroke-linecap="round"/></g></g>
<path d="M93.2 116 h6.4 l-3.2 4.6 z" fill="#777"/>
<rect x="65.9" y="99.9" width="1.8" height="1.8" fill="#fff"/><rect x="65" y="99" width="1.7" height="1.7" fill="#b4b4b4"/><rect x="68.30000000000001" y="102.9" width="1.8" height="1.8" fill="#fff"/><rect x="67.4" y="102" width="1.7" height="1.7" fill="#b4b4b4"/><rect x="65.9" y="105.9" width="1.8" height="1.8" fill="#fff"/><rect x="65" y="105" width="1.7" height="1.7" fill="#b4b4b4"/><rect x="68.30000000000001" y="108.9" width="1.8" height="1.8" fill="#fff"/><rect x="67.4" y="108" width="1.7" height="1.7" fill="#b4b4b4"/><rect x="65.9" y="111.9" width="1.8" height="1.8" fill="#fff"/><rect x="65" y="111" width="1.7" height="1.7" fill="#b4b4b4"/><rect x="68.30000000000001" y="114.9" width="1.8" height="1.8" fill="#fff"/><rect x="67.4" y="114" width="1.7" height="1.7" fill="#b4b4b4"/><rect x="65.9" y="117.9" width="1.8" height="1.8" fill="#fff"/><rect x="65" y="117" width="1.7" height="1.7" fill="#b4b4b4"/><rect x="68.30000000000001" y="120.9" width="1.8" height="1.8" fill="#fff"/><rect x="67.4" y="120" width="1.7" height="1.7" fill="#b4b4b4"/>
<rect x="454.4" y="99.9" width="1.8" height="1.8" fill="#fff"/><rect x="453.5" y="99" width="1.7" height="1.7" fill="#b4b4b4"/><rect x="456.79999999999995" y="102.9" width="1.8" height="1.8" fill="#fff"/><rect x="455.9" y="102" width="1.7" height="1.7" fill="#b4b4b4"/><rect x="454.4" y="105.9" width="1.8" height="1.8" fill="#fff"/><rect x="453.5" y="105" width="1.7" height="1.7" fill="#b4b4b4"/><rect x="456.79999999999995" y="108.9" width="1.8" height="1.8" fill="#fff"/><rect x="455.9" y="108" width="1.7" height="1.7" fill="#b4b4b4"/><rect x="454.4" y="111.9" width="1.8" height="1.8" fill="#fff"/><rect x="453.5" y="111" width="1.7" height="1.7" fill="#b4b4b4"/><rect x="456.79999999999995" y="114.9" width="1.8" height="1.8" fill="#fff"/><rect x="455.9" y="114" width="1.7" height="1.7" fill="#b4b4b4"/><rect x="454.4" y="117.9" width="1.8" height="1.8" fill="#fff"/><rect x="453.5" y="117" width="1.7" height="1.7" fill="#b4b4b4"/><rect x="456.79999999999995" y="120.9" width="1.8" height="1.8" fill="#fff"/><rect x="455.9" y="120" width="1.7" height="1.7" fill="#b4b4b4"/>
<rect x="729.9" y="99.9" width="1.8" height="1.8" fill="#fff"/><rect x="729" y="99" width="1.7" height="1.7" fill="#b4b4b4"/><rect x="732.3" y="102.9" width="1.8" height="1.8" fill="#fff"/><rect x="731.4" y="102" width="1.7" height="1.7" fill="#b4b4b4"/><rect x="729.9" y="105.9" width="1.8" height="1.8" fill="#fff"/><rect x="729" y="105" width="1.7" height="1.7" fill="#b4b4b4"/><rect x="732.3" y="108.9" width="1.8" height="1.8" fill="#fff"/><rect x="731.4" y="108" width="1.7" height="1.7" fill="#b4b4b4"/><rect x="729.9" y="111.9" width="1.8" height="1.8" fill="#fff"/><rect x="729" y="111" width="1.7" height="1.7" fill="#b4b4b4"/><rect x="732.3" y="114.9" width="1.8" height="1.8" fill="#fff"/><rect x="731.4" y="114" width="1.7" height="1.7" fill="#b4b4b4"/><rect x="729.9" y="117.9" width="1.8" height="1.8" fill="#fff"/><rect x="729" y="117" width="1.7" height="1.7" fill="#b4b4b4"/><rect x="732.3" y="120.9" width="1.8" height="1.8" fill="#fff"/><rect x="731.4" y="120" width="1.7" height="1.7" fill="#b4b4b4"/>
<rect x="742.4" y="99.9" width="1.8" height="1.8" fill="#fff"/><rect x="741.5" y="99" width="1.7" height="1.7" fill="#b4b4b4"/><rect x="744.8" y="102.9" width="1.8" height="1.8" fill="#fff"/><rect x="743.9" y="102" width="1.7" height="1.7" fill="#b4b4b4"/><rect x="742.4" y="105.9" width="1.8" height="1.8" fill="#fff"/><rect x="741.5" y="105" width="1.7" height="1.7" fill="#b4b4b4"/><rect x="744.8" y="108.9" width="1.8" height="1.8" fill="#fff"/><rect x="743.9" y="108" width="1.7" height="1.7" fill="#b4b4b4"/><rect x="742.4" y="111.9" width="1.8" height="1.8" fill="#fff"/><rect x="741.5" y="111" width="1.7" height="1.7" fill="#b4b4b4"/><rect x="744.8" y="114.9" width="1.8" height="1.8" fill="#fff"/><rect x="743.9" y="114" width="1.7" height="1.7" fill="#b4b4b4"/><rect x="742.4" y="117.9" width="1.8" height="1.8" fill="#fff"/><rect x="741.5" y="117" width="1.7" height="1.7" fill="#b4b4b4"/><rect x="744.8" y="120.9" width="1.8" height="1.8" fill="#fff"/><rect x="743.9" y="120" width="1.7" height="1.7" fill="#b4b4b4"/>
<g transform="translate(67.58 145.18) scale(1.06)"><path d="M3 3.5 L10 18 L15 4 L20.5 3" fill="none" stroke="#3a4a6a" stroke-width="1.2"/><circle cx="3" cy="3.5" r="1.9" fill="#fff" stroke="#2c4a78" stroke-width="1.1"/><circle cx="10" cy="18" r="1.9" fill="#fff" stroke="#2c4a78" stroke-width="1.1"/><circle cx="15" cy="4" r="1.9" fill="#fff" stroke="#2c4a78" stroke-width="1.1"/><circle cx="20.5" cy="3" r="1.9" fill="#fff" stroke="#2c4a78" stroke-width="1.1"/><rect x="14.5" y="14.5" width="9" height="9" rx="2" fill="#5a9e4f" stroke="#3c7a34" stroke-width="0.8"/><path d="M19.0 16.5 v5 M16.5 19.0 h5" stroke="#fff" stroke-width="1.8"/></g>
<g transform="translate(67.58 182.38) scale(1.06)"><rect x="0.5" y="0.5" width="6.2" height="6.2" fill="#27406a"/><rect x="6.7" y="0.5" width="6.2" height="6.2" fill="#6f97cc"/><rect x="12.9" y="0.5" width="6.2" height="6.2" fill="#27406a"/><rect x="0.5" y="6.7" width="6.2" height="6.2" fill="#6f97cc"/><rect x="6.7" y="6.7" width="6.2" height="6.2" fill="#27406a"/><rect x="12.9" y="6.7" width="6.2" height="6.2" fill="#6f97cc"/><rect x="0.5" y="12.9" width="6.2" height="6.2" fill="#27406a"/><rect x="6.7" y="12.9" width="6.2" height="6.2" fill="#6f97cc"/><rect x="12.9" y="12.9" width="6.2" height="6.2" fill="#a8c4e6"/><rect x="14.5" y="14.5" width="9" height="9" rx="2" fill="#5a9e4f" stroke="#3c7a34" stroke-width="0.8"/><path d="M19.0 16.5 v5 M16.5 19.0 h5" stroke="#fff" stroke-width="1.8"/></g>
<g transform="translate(67.58 219.68) scale(1.06)"><path d="M4 4 C6 0.5 16 0.5 18 5 C20 9 18 13 15.5 14 V20 H12.5 V15 H10.5 V12 C8 13.5 5.5 12.5 5.5 16 C5.5 19 3 18 3.2 15 C1 12 2 7 4 4 Z" fill="#5f8bc4" stroke="#2c4a78" stroke-width="1.1"/><path d="M8 5 C6.5 7 7 10 9 11.5" fill="none" stroke="#2c4a78" stroke-width="1"/><circle cx="12.5" cy="6.5" r="0.9" fill="#123"/><rect x="14.5" y="14.5" width="9" height="9" rx="2" fill="#5a9e4f" stroke="#3c7a34" stroke-width="0.8"/><path d="M19.0 16.5 v5 M16.5 19.0 h5" stroke="#fff" stroke-width="1.8"/></g>
<g transform="translate(67.58 258.88) scale(1.06)"><path d="M1.5 22.5 C3 14 8 5.5 22 1.5 C23 7 17.5 14.5 8.5 16.5 C6 17.5 3.5 19.5 1.5 22.5 Z" fill="#7ea3d0" stroke="#2f4a74" stroke-width="1"/><path d="M2 22 C6 14 12 8 21 2.4" stroke="#e8eef8" stroke-width="0.9" fill="none"/><path d="M9 14.5 C13 12 17 8 20 4.5 M6.5 17 C10 15 13 13 15 11" stroke="#2f4a74" stroke-width="0.6" fill="none"/><rect x="14.5" y="14.5" width="9" height="9" rx="2" fill="#5a9e4f" stroke="#3c7a34" stroke-width="0.8"/><path d="M19.0 16.5 v5 M16.5 19.0 h5" stroke="#fff" stroke-width="1.8"/></g>
<g transform="translate(67.58 296.08) scale(1.06)"><path d="M1.5 2 C9 1.5 19 5 23 12.5 C17 12.5 8 15 1 21.5 C5.5 14 5.5 9 1.5 2 Z" fill="#6f9dd2" stroke="#27446e" stroke-width="1.1"/><path d="M6.5 3 C10.5 8 10.5 13 7 17.5 M11.5 4 C15.5 8.5 15.5 11.5 13 15 M16.5 6 C19 9 19 11 18 13" fill="none" stroke="#27446e" stroke-width="0.9"/><rect x="14.5" y="14.5" width="9" height="9" rx="2" fill="#5a9e4f" stroke="#3c7a34" stroke-width="0.8"/><path d="M19.0 16.5 v5 M16.5 19.0 h5" stroke="#fff" stroke-width="1.8"/></g>
<g transform="translate(67.58 334.08) scale(1.06)"><circle cx="11" cy="11" r="8.6" fill="#d4e2f4" stroke="#2b4a78" stroke-width="1.2"/><ellipse cx="11" cy="11" rx="3.8" ry="8.6" fill="none" stroke="#5b86c0" stroke-width="0.9"/><path d="M2.6 11 h16.8 M4 6.5 h14 M4 15.5 h14" stroke="#5b86c0" stroke-width="0.9"/><path d="M6 6 l3 -1 l2 2 l-2 3 l-3 -1 z M12 10 l4 -1 l1 4 l-3 2 z" fill="#2b4a78"/><rect x="14.5" y="14.5" width="9" height="9" rx="2" fill="#5a9e4f" stroke="#3c7a34" stroke-width="0.8"/><path d="M19.0 16.5 v5 M16.5 19.0 h5" stroke="#fff" stroke-width="1.8"/></g>
<g transform="translate(67.58 372.48) scale(1.06)"><circle cx="11" cy="11" r="8.6" fill="#3b66a4" stroke="#1a2f54" stroke-width="1.2"/><ellipse cx="11" cy="11" rx="3.8" ry="8.6" fill="none" stroke="#e8eef8" stroke-width="0.9"/><path d="M2.6 11 h16.8 M4 6.5 h14 M4 15.5 h14" stroke="#e8eef8" stroke-width="0.9"/><rect x="14.5" y="14.5" width="9" height="9" rx="2" fill="#5a9e4f" stroke="#3c7a34" stroke-width="0.8"/><path d="M19.0 16.5 v5 M16.5 19.0 h5" stroke="#fff" stroke-width="1.8"/></g>
<g transform="translate(67.58 410.48) scale(1.06)"><circle cx="11" cy="11" r="8.6" fill="#dce8f6" stroke="#2b4a78" stroke-width="1.2"/><ellipse cx="11" cy="11" rx="3.8" ry="8.6" fill="none" stroke="#7ea3d0" stroke-width="0.9"/><path d="M2.6 11 h16.8 M4 6.5 h14 M4 15.5 h14" stroke="#7ea3d0" stroke-width="0.9"/><path d="M5.5 6.5 L10.5 16 L14 6.5 L17 6" fill="none" stroke="#223" stroke-width="1.1"/><circle cx="5.5" cy="6.5" r="1.5" fill="#fff" stroke="#223" stroke-width="0.9"/><circle cx="14" cy="6.5" r="1.5" fill="#fff" stroke="#223" stroke-width="0.9"/><circle cx="10.5" cy="16" r="1.5" fill="#fff" stroke="#223" stroke-width="0.9"/><rect x="14.5" y="14.5" width="9" height="9" rx="2" fill="#5a9e4f" stroke="#3c7a34" stroke-width="0.8"/><path d="M19.0 16.5 v5 M16.5 19.0 h5" stroke="#fff" stroke-width="1.8"/></g>
<g transform="translate(67.58 448.88) scale(1.06)"><path d="M6 5.5 C6 1 15 1 15 7 C15 12 10 15.5 5 17 L4.5 15.5 C8 14 10 12 10 9.5 C8 10.5 6 8.5 6 5.5 Z" fill="#4f7fc0" stroke="#2c4a78" stroke-width="0.9"/><rect x="14.5" y="14.5" width="9" height="9" rx="2" fill="#5a9e4f" stroke="#3c7a34" stroke-width="0.8"/><path d="M19.0 16.5 v5 M16.5 19.0 h5" stroke="#fff" stroke-width="1.8"/></g>
<g transform="translate(67.58 488.08) scale(1.06)"><path d="M1.5 22.5 C3 14 8 5.5 22 1.5 C23 7 17.5 14.5 8.5 16.5 C6 17.5 3.5 19.5 1.5 22.5 Z" fill="#7ea3d0" stroke="#2f4a74" stroke-width="1"/><path d="M2 22 C6 14 12 8 21 2.4" stroke="#e8eef8" stroke-width="0.9" fill="none"/><path d="M9 14.5 C13 12 17 8 20 4.5 M6.5 17 C10 15 13 13 15 11" stroke="#2f4a74" stroke-width="0.6" fill="none"/><g><rect x="14.5" y="14.5" width="9" height="9" rx="2" fill="#e3b81c" stroke="#c79a10" stroke-width="0.8"/><path d="M19.0 15.8 v6.4 M16.2 17.4 l5.6 3.2 M16.2 20.6 l5.6 -3.2" stroke="#fff" stroke-width="1.3"/></g></g>
<g transform="translate(67.58 525.28) scale(1.06)"><rect x="3" y="2.5" width="16" height="16" fill="#fff" stroke="#888" stroke-width="1"/><rect x="14" y="14" width="9" height="9" rx="2" fill="#e04848" stroke="#b82828" stroke-width="0.8"/><path d="M15.8 18.5 h5.4" stroke="#fff" stroke-width="2"/></g>
<path d="M95 502 h7 l-3.5 5.4 z" fill="#4a4a4a"/>
<rect x="66.9" y="136.4" width="1.8" height="1.8" fill="#fff"/><rect x="66" y="135.5" width="1.7" height="1.7" fill="#b4b4b4"/><rect x="69.9" y="138.8" width="1.8" height="1.8" fill="#fff"/><rect x="69" y="137.9" width="1.7" height="1.7" fill="#b4b4b4"/><rect x="72.9" y="136.4" width="1.8" height="1.8" fill="#fff"/><rect x="72" y="135.5" width="1.7" height="1.7" fill="#b4b4b4"/><rect x="75.9" y="138.8" width="1.8" height="1.8" fill="#fff"/><rect x="75" y="137.9" width="1.7" height="1.7" fill="#b4b4b4"/><rect x="78.9" y="136.4" width="1.8" height="1.8" fill="#fff"/><rect x="78" y="135.5" width="1.7" height="1.7" fill="#b4b4b4"/><rect x="81.9" y="138.8" width="1.8" height="1.8" fill="#fff"/><rect x="81" y="137.9" width="1.7" height="1.7" fill="#b4b4b4"/><rect x="84.9" y="136.4" width="1.8" height="1.8" fill="#fff"/><rect x="84" y="135.5" width="1.7" height="1.7" fill="#b4b4b4"/><rect x="87.9" y="138.8" width="1.8" height="1.8" fill="#fff"/><rect x="87" y="137.9" width="1.7" height="1.7" fill="#b4b4b4"/><rect x="90.9" y="136.4" width="1.8" height="1.8" fill="#fff"/><rect x="90" y="135.5" width="1.7" height="1.7" fill="#b4b4b4"/><rect x="93.9" y="138.8" width="1.8" height="1.8" fill="#fff"/><rect x="93" y="137.9" width="1.7" height="1.7" fill="#b4b4b4"/><rect x="96.9" y="136.4" width="1.8" height="1.8" fill="#fff"/><rect x="96" y="135.5" width="1.7" height="1.7" fill="#b4b4b4"/>
<rect x="66.9" y="563.9" width="1.8" height="1.8" fill="#fff"/><rect x="66" y="563" width="1.7" height="1.7" fill="#b4b4b4"/><rect x="69.9" y="566.3" width="1.8" height="1.8" fill="#fff"/><rect x="69" y="565.4" width="1.7" height="1.7" fill="#b4b4b4"/><rect x="72.9" y="563.9" width="1.8" height="1.8" fill="#fff"/><rect x="72" y="563" width="1.7" height="1.7" fill="#b4b4b4"/><rect x="75.9" y="566.3" width="1.8" height="1.8" fill="#fff"/><rect x="75" y="565.4" width="1.7" height="1.7" fill="#b4b4b4"/><rect x="78.9" y="563.9" width="1.8" height="1.8" fill="#fff"/><rect x="78" y="563" width="1.7" height="1.7" fill="#b4b4b4"/><rect x="81.9" y="566.3" width="1.8" height="1.8" fill="#fff"/><rect x="81" y="565.4" width="1.7" height="1.7" fill="#b4b4b4"/><rect x="84.9" y="563.9" width="1.8" height="1.8" fill="#fff"/><rect x="84" y="563" width="1.7" height="1.7" fill="#b4b4b4"/><rect x="87.9" y="566.3" width="1.8" height="1.8" fill="#fff"/><rect x="87" y="565.4" width="1.7" height="1.7" fill="#b4b4b4"/><rect x="90.9" y="563.9" width="1.8" height="1.8" fill="#fff"/><rect x="90" y="563" width="1.7" height="1.7" fill="#b4b4b4"/><rect x="93.9" y="566.3" width="1.8" height="1.8" fill="#fff"/><rect x="93" y="565.4" width="1.7" height="1.7" fill="#b4b4b4"/><rect x="96.9" y="563.9" width="1.8" height="1.8" fill="#fff"/><rect x="96" y="563" width="1.7" height="1.7" fill="#b4b4b4"/>
<circle cx="115" cy="141" r="6.7" fill="#3a3a3a"/>
<path d="M112.2 138.2 l5.6 5.6 M117.8 138.2 l-5.6 5.6" stroke="#fff" stroke-width="2"/>
<circle cx="135" cy="141" r="6.7" fill="#3a3a3a"/>
<rect x="133.5" y="138" width="4.6" height="3.6" fill="none" stroke="#fff" stroke-width="1.1"/><rect x="131.6" y="140.2" width="4.6" height="3.6" fill="#3a3a3a" stroke="#fff" stroke-width="1.1"/>
<path d="M113.3 161.6 L120.3 166 L113.3 170.4 Z" fill="#8c8c8c"/>
<rect x="133.5" y="159.5" width="13" height="13" rx="2.4" fill="#e9edf2" stroke="#5a6270" stroke-width="1"/>
<path d="M133.5 166.5 h13 v4 q0 2 -2 2 h-9 q-2 0 -2 -2 z" fill="#cfd8e2" opacity="0.9"/>
<path d="M136.3 165.2 L139.6 169.6 L147.2 157.8" fill="none" stroke="#16202e" stroke-width="2.1" stroke-linejoin="miter"/>
<circle cx="165.2" cy="161" r="1.1" fill="#fff" stroke="#777" stroke-width="0.6"/>
<circle cx="172.5" cy="158" r="1.1" fill="#fff" stroke="#777" stroke-width="0.6"/>
<circle cx="163.3" cy="170.4" r="1.1" fill="#fff" stroke="#777" stroke-width="0.6"/>
<path d="M113.3 181.6 L120.3 186 L113.3 190.4 Z" fill="#8c8c8c"/>
<rect x="133.5" y="179.5" width="13" height="13" rx="2.4" fill="#e9edf2" stroke="#5a6270" stroke-width="1"/>
<path d="M133.5 186.5 h13 v4 q0 2 -2 2 h-9 q-2 0 -2 -2 z" fill="#cfd8e2" opacity="0.9"/>
<path d="M136.3 185.2 L139.6 189.6 L147.2 177.8" fill="none" stroke="#16202e" stroke-width="2.1" stroke-linejoin="miter"/>
<path d="M160.5 185 C160 180 164 180 167.5 181 C171 179.5 176 180 175.8 185 C176 189.5 173 189 169.5 187.5 C166 189 161.5 192.5 160.5 185 Z" fill="#e4e8ec" stroke="#8a8a8a" stroke-width="0.9"/>
<path d="M113.3 201.6 L120.3 206 L113.3 210.4 Z" fill="#8c8c8c"/>
<rect x="133.5" y="199.5" width="13" height="13" rx="2.4" fill="#e9edf2" stroke="#5a6270" stroke-width="1"/>
<path d="M133.5 206.5 h13 v4 q0 2 -2 2 h-9 q-2 0 -2 -2 z" fill="#cfd8e2" opacity="0.9"/>
<path d="M136.3 205.2 L139.6 209.6 L147.2 197.8" fill="none" stroke="#16202e" stroke-width="2.1" stroke-linejoin="miter"/>
<path d="M162 202 L165.5 212 L170 200 L174 199.5" fill="none" stroke="#666" stroke-width="0.8"/>
<circle cx="162" cy="202" r="0.9" fill="#fff" stroke="#777" stroke-width="0.5"/>
<circle cx="165.5" cy="212" r="0.9" fill="#fff" stroke="#777" stroke-width="0.5"/>
<circle cx="170" cy="200" r="0.9" fill="#fff" stroke="#777" stroke-width="0.5"/>
<circle cx="174" cy="199.5" r="0.9" fill="#fff" stroke="#777" stroke-width="0.5"/>
<path d="M113.3 221.6 L120.3 226 L113.3 230.4 Z" fill="#8c8c8c"/>
<rect x="133.5" y="219.5" width="13" height="13" rx="2.4" fill="#e9edf2" stroke="#5a6270" stroke-width="1"/>
<path d="M133.5 226.5 h13 v4 q0 2 -2 2 h-9 q-2 0 -2 -2 z" fill="#cfd8e2" opacity="0.9"/>
<path d="M136.3 225.2 L139.6 229.6 L147.2 217.8" fill="none" stroke="#16202e" stroke-width="2.1" stroke-linejoin="miter"/>
<path d="M160.5 225 C160 220 164 220 167.5 221 C171 219.5 176 220 175.8 225 C176 229.5 173 229 169.5 227.5 C166 229 161.5 232.5 160.5 225 Z" fill="#e4e8ec" stroke="#8a8a8a" stroke-width="0.9"/>
<path d="M113.3 241.6 L120.3 246 L113.3 250.4 Z" fill="#8c8c8c"/>
<rect x="133.5" y="239.5" width="13" height="13" rx="2.4" fill="#e9edf2" stroke="#5a6270" stroke-width="1"/>
<path d="M133.5 246.5 h13 v4 q0 2 -2 2 h-9 q-2 0 -2 -2 z" fill="#cfd8e2" opacity="0.9"/>
<path d="M136.3 245.2 L139.6 249.6 L147.2 237.8" fill="none" stroke="#16202e" stroke-width="2.1" stroke-linejoin="miter"/>
<path d="M162 242 L165.5 252 L170 240 L174 239.5" fill="none" stroke="#666" stroke-width="0.8"/>
<circle cx="162" cy="242" r="0.9" fill="#fff" stroke="#777" stroke-width="0.5"/>
<circle cx="165.5" cy="252" r="0.9" fill="#fff" stroke="#777" stroke-width="0.5"/>
<circle cx="170" cy="240" r="0.9" fill="#fff" stroke="#777" stroke-width="0.5"/>
<circle cx="174" cy="239.5" r="0.9" fill="#fff" stroke="#777" stroke-width="0.5"/>
<path d="M113.3 261.6 L120.3 266 L113.3 270.4 Z" fill="#8c8c8c"/>
<rect x="133.5" y="259.5" width="13" height="13" rx="2.4" fill="#e9edf2" stroke="#5a6270" stroke-width="1"/>
<path d="M133.5 266.5 h13 v4 q0 2 -2 2 h-9 q-2 0 -2 -2 z" fill="#cfd8e2" opacity="0.9"/>
<path d="M136.3 265.2 L139.6 269.6 L147.2 257.8" fill="none" stroke="#16202e" stroke-width="2.1" stroke-linejoin="miter"/>
<path d="M160.5 265 C160 260 164 260 167.5 261 C171 259.5 176 260 175.8 265 C176 269.5 173 269 169.5 267.5 C166 269 161.5 272.5 160.5 265 Z" fill="#dfe7f2" stroke="#9ab4dc" stroke-width="0.9"/>
<g transform="translate(1174 1183)"><path d="M5 4 C3 8 4 13 8 16 M6 3 L14 15 M10 3 C14 5 15 10 12 14" fill="none" stroke="#222" stroke-width="1.6"/><circle cx="11.5" cy="12" r="2.4" fill="none" stroke="#222" stroke-width="1.2"/></g>
<g transform="translate(1735 1183)"><circle cx="7" cy="6.5" r="3.6" fill="none" stroke="#d82020" stroke-width="1.5"/><path d="M4.6 9 L9.4 4" stroke="#d82020" stroke-width="1.4"/><path d="M4 16.5 C9 15 13 10 16.5 2.5 C15 9 12 15 5.5 17.5 Z" fill="#777" stroke="#555" stroke-width="0.7"/></g>
<path d="M1764.3 1192.3 L1767.6 1197 L1775.6 1184.6" fill="none" stroke="#16202e" stroke-width="2.1"/>
<g transform="translate(1905 1183)"><circle cx="9.5" cy="9.5" r="6.3" fill="#b8b8b8" stroke="#666" stroke-width="1"/><ellipse cx="9.5" cy="9.5" rx="2.6" ry="6.3" fill="none" stroke="#666" stroke-width="0.8"/><path d="M3.2 9.5 h12.6 M9.5 3.2 v12.6" stroke="#666" stroke-width="0.8"/></g>
<g transform="translate(1931 1183)"><path d="M9.5 3.2 L16 15.6 H3 Z" fill="#f4f09a" stroke="#555" stroke-width="1" stroke-linejoin="round"/><path d="M9.5 7.5 v4.4 M9.5 13 v1.4" stroke="#222" stroke-width="1.4"/></g>
<path d="M1964 1206 L1975 1195 M1968 1206 L1975 1199 M1972 1206 L1975 1203" stroke="#9a9a9a" stroke-width="1"/>
</svg>
</body></html>
